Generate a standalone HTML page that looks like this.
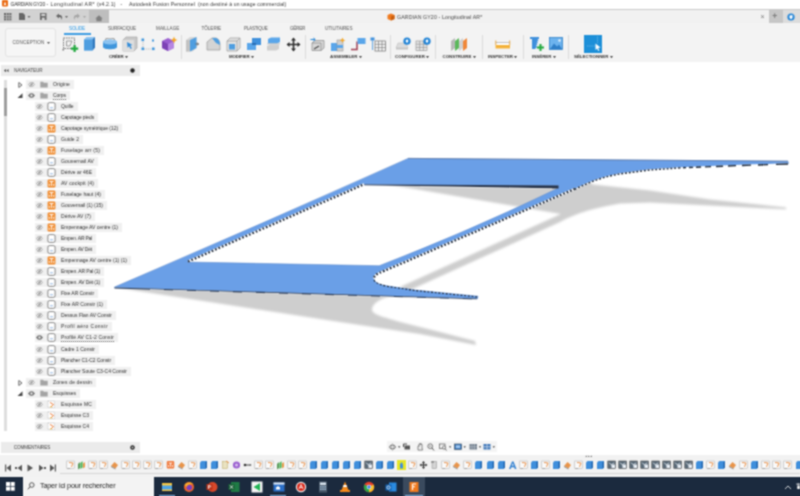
<!DOCTYPE html><html lang="fr"><head><meta charset="utf-8"><title>GARDIAN GY20 - Longitudinal AR</title><style>
*{margin:0;padding:0;box-sizing:border-box}
html{width:800px;height:496px;overflow:hidden;background:#fff;position:relative}
body{position:absolute;left:-10px;top:-10px;width:820px;height:516px;background:#fff;filter:url(#soft);font-family:"Liberation Sans",sans-serif;color:#3a3a3a}
#app{position:absolute;left:10px;top:10px;width:800px;height:496px}
.a{position:absolute}
.t{position:absolute;white-space:nowrap;line-height:1.16}
.sep{position:absolute;top:35px;width:1px;height:24px;background:#dadada}
</style></head><body><svg width="0" height="0" style="position:absolute"><defs><filter id="soft" x="0" y="0" width="100%" height="100%" color-interpolation-filters="sRGB"><feConvolveMatrix order="3" kernelMatrix="1 2 1 2 5 2 1 2 1" divisor="17" edgeMode="duplicate" preserveAlpha="true"/></filter></defs></svg><div id="app">
<svg class="a" style="left:0;top:0" width="800" height="496" viewBox="0 0 800 496">
<defs><filter id="bl" x="-5%" y="-20%" width="110%" height="140%"><feGaussianBlur stdDeviation="0.9"/></filter></defs>
<g filter="url(#bl)" fill="#cecece">
<path d="M116,287.6 L280,312.8 L340,322 L420,334 L476,345 L475,341 L440,332 L400,322 C386,317.5 371,315 372,309 C373,303 380,299 390,296 L300,288 Z"/>
<path d="M380,183 L561,214 L400,287 L408,291 L560,222 C575,214 590,208.5 620,203.5 L650,202.5 L710,205.5 L786,209.3 L786,207.5 L710,199.5 L650,190.5 L593,184.5 L570,170 Z"/>
</g>
<path d="M114.5,287 Q261.25,224.3 408,158.4 L788,161.2 L788.5,163.5 L740,165 L680,167.4 L650,169.5 L620,173.4 C605,176 590,181 575,188.8 L392,267.6 C382,272 373.5,274 374,279 C374.5,283 380,284.6 388,286 L415,290 L478,296.2 L477.5,298.8 L114.5,287.6 Z M187.5,262 L364,184.4 L558.5,185.8 L558.3,188 Q468.75,231.3 379.2,265.7 Z" fill="#6a9fe7" fill-rule="evenodd" stroke="#5b86c8" stroke-width="0.5"/>
<path d="M408,158.4 L788,161.2" stroke="#56709c" stroke-width="0.7" fill="none"/>
<g fill="none" stroke-linecap="butt">
<path d="M114.5,288 L477,299" stroke="#2b3b55" stroke-width="1.2"/>
<path d="M150,289.6 L477,299.6" stroke="#e8e8e8" stroke-width="0.8" stroke-dasharray="14 9"/>
<path d="M364,184.4 L558.5,185.6 L558.5,188.6 L470,186.8 L364,185.2 Z" fill="#26334a" stroke="none"/>
<path d="M420,186.8 L552,188.7" stroke="#f0f0f0" stroke-width="0.6"/>
<path d="M188,261.6 L364,184.3" stroke="#fff" stroke-width="2.2"/>
<path d="M188,261.6 L364,184.3" stroke="#1b2535" stroke-width="2.2" stroke-dasharray="1.7 2"/>
<path d="M575,188.8 L392,267.6 C382,272 374,274 374,278.5" stroke="#fff" stroke-width="2.2"/>
<path d="M575,188.8 L392,267.6 C382,272 374,274 374,278.5" stroke="#1b2535" stroke-width="2.2" stroke-dasharray="1.7 2"/>
<path d="M788,164 L740,165.5 L680,167.9 L650,170 L620,173.9 C605,176.5 590,181.5 575,189.3" stroke="#fff" stroke-width="1.4"/>
<path d="M788,164 L740,165.5 L680,167.9 L650,170 L620,173.9 C605,176.5 590,181.5 575,189.3" stroke="#1b2535" stroke-width="1.4" stroke-dasharray="12 8 10 7 9 6 8 5 7 5 6 4 5 3 4 3 3 2.5 2.5 2 1.9 1.9 1.9 1.9 1.9 1.9 1.9 1.9 1.9 1.9 1.9 1.9 1.9 1.9 1.9 1.9 1.9 1.9 1.9 1.9 1.9 1.9 1.9 1.9 1.9 1.9 1.9 1.9 1.9 1.9 1.9 1.9 1.9 1.9 1.9 1.9 1.9 1.9 1.9 1.9 1.9 1.9 1.9 1.9 1.9 1.9 1.9 1.9 1.9 1.9 1.9 1.9 1.9 1.9 1.9 1.9 1.9 1.9 1.9 1.9 1.9 1.9 1.9 1.9 1.9 1.9 1.9 1.9 1.9 1.9 1.9 1.9 1.9 1.9 1.9 1.9 1.9 1.9 1.9 1.9 1.9 1.9 1.9 1.9 1.9 1.9 1.9 1.9 1.9 1.9 1.9 1.9 1.9 1.9 1.9 1.9 1.9 1.9 1.9 1.9 1.9 1.9 1.9 1.9 1.9 1.9 1.9 1.9 1.9 1.9 1.9 1.9 1.9 1.9 1.9 1.9 1.9 1.9 1.9 1.9"/>
<path d="M374,280 C375.5,283.5 382,285.2 388,286.5 L415,290.5 L478,297" stroke="#1b2535" stroke-width="1.1" stroke-dasharray="2 1.7"/>
</g>
</svg>
<div class="a" style="left:-6px;top:-6px;width:812px;height:15.5px;background:#fff;"></div>
<svg class="a" style="left:1.8px;top:0.3px;" width="6" height="6.5" viewBox="0 0 6 6.5"><rect x="0" y="0" width="6" height="6.5" rx="1" fill="#ea6a12"/><path d="M1.8,5 L3,1.5 L4.2,5 Z" fill="#fff"/></svg>
<span class="t" style="left:10.5px;top:1.54px;font-size:5.1px;color:#333;letter-spacing:-0.266px;">GARDIAN GY20</span>
<span class="t" style="left:46.5px;top:1.54px;font-size:5.1px;color:#333;">-</span>
<span class="t" style="left:50.5px;top:1.54px;font-size:5.1px;color:#333;letter-spacing:0.424px;">Longitudinal AR*</span>
<span class="t" style="left:97px;top:1.54px;font-size:5.1px;color:#333;letter-spacing:0.151px;">(v4.2.1)</span>
<span class="t" style="left:120.5px;top:1.54px;font-size:5.1px;color:#333;">-</span>
<span class="t" style="left:129px;top:1.54px;font-size:5.1px;color:#333;letter-spacing:0.145px;">Autodesk Fusion Personnel</span>
<span class="t" style="left:198px;top:1.54px;font-size:5.1px;color:#333;letter-spacing:0.131px;">(non destiné à un usage commercial)</span>
<div class="a" style="left:-6px;top:8.8px;width:812px;height:14.5px;background:#f1f1f1;border-top:1px solid #c9c9c9"></div>
<div class="a" style="left:-6px;top:9.8px;width:114px;height:13.5px;background:#d2d2d2;"></div>
<div class="a" style="left:88.5px;top:9.8px;width:20px;height:13.5px;background:#bebebe;"></div>
<div class="a" style="left:768.5px;top:9.8px;width:14px;height:13.5px;background:#c6c6c6;"></div>
<div class="a" style="left:782.5px;top:9.8px;width:23.5px;height:13.5px;background:#dcdcdc;"></div>
<svg class="a" style="left:4px;top:13px;" width="8" height="8" viewBox="0 0 8 8"><g fill="#666"><rect x="0" y="0" width="2" height="2"/><rect x="2.7" y="0" width="2" height="2"/><rect x="5.4" y="0" width="2" height="2"/><rect x="0" y="2.7" width="2" height="2"/><rect x="2.7" y="2.7" width="2" height="2"/><rect x="5.4" y="2.7" width="2" height="2"/><rect x="0" y="5.4" width="2" height="2"/><rect x="2.7" y="5.4" width="2" height="2"/><rect x="5.4" y="5.4" width="2" height="2"/></g></svg>
<svg class="a" style="left:19px;top:13px;" width="12" height="8" viewBox="0 0 12 8"><path d="M0,0 H4 L6,2 V7 H0 Z" fill="#666"/><path d="M8.5,3 h3 l-1.5,2 Z" fill="#666"/></svg>
<svg class="a" style="left:40px;top:13px;" width="7" height="8" viewBox="0 0 7 8"><rect x="0" y="0" width="6.5" height="7" fill="#666"/><rect x="1.3" y="0.8" width="3.9" height="2.2" fill="#d3d3d3"/><rect x="1.8" y="4.6" width="2.9" height="2.4" fill="#d3d3d3"/></svg>
<svg class="a" style="left:55px;top:13px;" width="14" height="8" viewBox="0 0 14 8"><path d="M1,3 L4,0.5 V2 C7,2 8,4 6.5,7 C6.5,5 6,4 4,4 V5.5 Z" fill="#666"/><path d="M10,3 h3 l-1.5,2 Z" fill="#666"/></svg>
<svg class="a" style="left:73px;top:13px;" width="14" height="8" viewBox="0 0 14 8"><path d="M7,3 L4,0.5 V2 C1,2 0,4 1.5,7 C1.5,5 2,4 4,4 V5.5 Z" fill="#a5a5a5"/><path d="M10,3 h3 l-1.5,2 Z" fill="#a5a5a5"/></svg>
<svg class="a" style="left:94.5px;top:14.8px;" width="8" height="7" viewBox="0 0 8 7"><path d="M4,0.3 L7.7,3.5 H6.6 V6.3 H1.4 V3.5 H0.3 Z" fill="#7f7f7f"/></svg>
<svg class="a" style="left:386.5px;top:13px;" width="8" height="8" viewBox="0 0 8 8"><path d="M4,0.5 L7.5,2 V6 L4,7.6 L0.5,6 V2 Z" fill="#f07a1e"/><path d="M4,3.6 L7.5,2 V6 L4,7.6 Z" fill="#c85f10"/></svg>
<span class="t" style="left:397px;top:14.28px;font-size:5.2px;color:#444;letter-spacing:0.129px;">GARDIAN GY20 - Longitudinal AR*</span>
<span class="t" style="left:760.5px;top:13.24px;font-size:7px;color:#777;">×</span>
<span class="t" style="left:772.3px;top:12.07px;font-size:8.5px;color:#7a7a7a;font-weight:bold;">+</span>
<svg class="a" style="left:787px;top:13px;" width="8" height="8" viewBox="0 0 8 8"><circle cx="4" cy="4" r="3.6" fill="#1e82d6"/><path d="M2.5,2.5 L5.5,2 V5 L4,6.3 L2.5,5 Z" fill="#fff"/></svg>
<div class="a" style="left:-6px;top:23.3px;width:812px;height:39px;background:#f3f3f3;"></div>
<div class="a" style="left:4.5px;top:27.8px;width:51.5px;height:29.5px;background:#f6f6f6;border:1px solid #e2e2e2;border-radius:3px"></div>
<span class="t" style="left:12.4px;top:40.13px;font-size:4.6px;color:#555;letter-spacing:0.133px;">CONCEPTION</span>
<svg class="a" style="left:46.5px;top:41.8px;" width="4" height="3" viewBox="0 0 4 3"><path d="M0,0 H3 L1.5,2 Z" fill="#555"/></svg>
<span class="t" style="left:69px;top:26.13px;font-size:4.6px;color:#2f9be6;letter-spacing:-0.145px;">SOLIDE</span>
<span class="t" style="left:108px;top:26.13px;font-size:4.6px;color:#555;letter-spacing:-0.191px;">SURFACIQUE</span>
<span class="t" style="left:156px;top:26.13px;font-size:4.6px;color:#555;letter-spacing:0.061px;">MAILLAGE</span>
<span class="t" style="left:201.5px;top:26.13px;font-size:4.6px;color:#555;letter-spacing:-0.026px;">TÔLERIE</span>
<span class="t" style="left:244px;top:26.13px;font-size:4.6px;color:#555;letter-spacing:-0.258px;">PLASTIQUE</span>
<span class="t" style="left:290px;top:26.13px;font-size:4.6px;color:#555;letter-spacing:-0.272px;">GÉRER</span>
<span class="t" style="left:325px;top:26.13px;font-size:4.6px;color:#555;letter-spacing:-0.002px;">UTILITAIRES</span>
<div class="a" style="left:63.5px;top:33.2px;width:27px;height:1.9px;background:#3a9be2;"></div>
<div class="sep" style="left:181px"></div>
<div class="sep" style="left:304.5px"></div>
<div class="sep" style="left:389.5px"></div>
<div class="sep" style="left:435px"></div>
<div class="sep" style="left:482px"></div>
<div class="sep" style="left:523px"></div>
<div class="sep" style="left:567.5px"></div>
<span class="t" style="left:109px;top:54.05px;font-size:4.4px;color:#333;font-weight:bold;letter-spacing:-0.181px;">CRÉER</span>
<svg class="a" style="left:124.7px;top:55.6px;" width="3.5" height="3" viewBox="0 0 3.5 3"><path d="M0,0 H3 L1.5,2.2 Z" fill="#444"/></svg>
<span class="t" style="left:229px;top:54.05px;font-size:4.4px;color:#333;font-weight:bold;letter-spacing:-0.126px;">MODIFIER</span>
<svg class="a" style="left:250.7px;top:55.6px;" width="3.5" height="3" viewBox="0 0 3.5 3"><path d="M0,0 H3 L1.5,2.2 Z" fill="#444"/></svg>
<span class="t" style="left:330px;top:54.05px;font-size:4.4px;color:#333;font-weight:bold;letter-spacing:-0.014px;">ASSEMBLER</span>
<svg class="a" style="left:358.7px;top:55.6px;" width="3.5" height="3" viewBox="0 0 3.5 3"><path d="M0,0 H3 L1.5,2.2 Z" fill="#444"/></svg>
<span class="t" style="left:395px;top:54.05px;font-size:4.4px;color:#333;font-weight:bold;letter-spacing:0.042px;">CONFIGURER</span>
<svg class="a" style="left:426.2px;top:55.6px;" width="3.5" height="3" viewBox="0 0 3.5 3"><path d="M0,0 H3 L1.5,2.2 Z" fill="#444"/></svg>
<span class="t" style="left:442.5px;top:54.05px;font-size:4.4px;color:#333;font-weight:bold;letter-spacing:-0.009px;">CONSTRUIRE</span>
<svg class="a" style="left:472.7px;top:55.6px;" width="3.5" height="3" viewBox="0 0 3.5 3"><path d="M0,0 H3 L1.5,2.2 Z" fill="#444"/></svg>
<span class="t" style="left:488px;top:54.05px;font-size:4.4px;color:#333;font-weight:bold;letter-spacing:-0.02px;">INSPECTER</span>
<svg class="a" style="left:514.2px;top:55.6px;" width="3.5" height="3" viewBox="0 0 3.5 3"><path d="M0,0 H3 L1.5,2.2 Z" fill="#444"/></svg>
<span class="t" style="left:532px;top:54.05px;font-size:4.4px;color:#333;font-weight:bold;letter-spacing:-0.009px;">INSÉRER</span>
<svg class="a" style="left:552.7px;top:55.6px;" width="3.5" height="3" viewBox="0 0 3.5 3"><path d="M0,0 H3 L1.5,2.2 Z" fill="#444"/></svg>
<span class="t" style="left:574px;top:54.05px;font-size:4.4px;color:#333;font-weight:bold;letter-spacing:0.003px;">SÉLECTIONNER</span>
<svg class="a" style="left:609.7px;top:55.6px;" width="3.5" height="3" viewBox="0 0 3.5 3"><path d="M0,0 H3 L1.5,2.2 Z" fill="#444"/></svg>
<svg class="a" style="left:62px;top:36.5px;" width="17" height="15" viewBox="0 0 17 15"><rect x="1.5" y="1" width="11" height="10.5" fill="none" stroke="#444" stroke-width="0.8" stroke-dasharray="1.5 1"/><path d="M4.5,4 H10 L8,9 H4.5 Z" fill="none" stroke="#777" stroke-width="0.7"/><path d="M11.5,8 h2.2 v2.5 h2.5 v2.2 h-2.5 v2.3 h-2.2 v-2.3 h-2.5 v-2.2 h2.5 Z" fill="#1fa83c"/><rect x="0.5" y="12" width="1.5" height="1.5" fill="#777"/></svg>
<svg class="a" style="left:82.5px;top:36.3px;" width="13" height="15" viewBox="0 0 13 15"><path d="M1,3.5 L3.5,1 H12 V11.5 L9.5,14.5 H1 Z" fill="#8cc3f0"/><path d="M1,3.5 H9.5 V14.5 H1 Z" fill="#4f9ee0"/><path d="M9.5,3.5 L12,1 V11.5 L9.5,14.5 Z" fill="#2f78be"/></svg>
<svg class="a" style="left:101.5px;top:37.5px;" width="16" height="13" viewBox="0 0 16 13"><path d="M1,4 C1,1 15,1 15,4 V9 C15,12 1,12 1,9 Z" fill="#3f96dc"/><ellipse cx="8" cy="4" rx="7" ry="2.5" fill="#8cc3f0"/><path d="M3,1.5 C6,-0.5 10,-0.5 13,1.5" fill="none" stroke="#555" stroke-width="0.7"/></svg>
<svg class="a" style="left:121.5px;top:36px;" width="16" height="16" viewBox="0 0 16 16"><path d="M1,4 L4,1 H15 V12 L12,15 H1 Z" fill="#c9c9c9" stroke="#9a9a9a" stroke-width="0.6"/><path d="M1,4 H12 V15 H1 Z" fill="#dedede"/><path d="M5,6 L10.5,9 L8.3,9.6 L9.8,12.3 L8.6,12.9 L7.2,10.2 L5.6,11.7 Z" fill="#2f8ad8"/></svg>
<svg class="a" style="left:141px;top:37.5px;" width="15" height="13" viewBox="0 0 15 13"><path d="M2,2 V11 H13" fill="none" stroke="#8a8a8a" stroke-width="0.6" stroke-dasharray="1 1"/><g fill="#3f96dc"><rect x="0.5" y="0.5" width="2.6" height="2.6"/><rect x="0.5" y="9.5" width="2.6" height="2.6"/><rect x="11" y="9.5" width="2.6" height="2.6"/><rect x="11" y="1.5" width="2" height="2"/></g></svg>
<svg class="a" style="left:160px;top:36px;" width="18" height="16" viewBox="0 0 18 16"><path d="M2,5 L8,2 L14,5 V12 L8,15 L2,12 Z" fill="#9a5fd0"/><path d="M2,5 L8,8 V15 L2,12 Z" fill="#7d43b5"/><path d="M8,8 L14,5 V12 L8,15 Z" fill="#b586e2"/><path d="M14,0.5 L15,3 L17.5,4 L15,5 L14,7.5 L13,5 L10.5,4 L13,3 Z" fill="#f5a623"/></svg>
<svg class="a" style="left:185px;top:36px;" width="14" height="16" viewBox="0 0 14 16"><path d="M1,4 L5,1 H11.5 V12 L7.5,15.5 H1 Z" fill="#d6d6d6"/><path d="M1,4 H5 V15.5 H1 Z" fill="#c2c2c2"/><path d="M5,4 L11.5,1 V12 L5,15.5 Z" fill="#4f9ee0"/><path d="M10.5,8 h3 M12,6.5 l1.5,1.5 l-1.5,1.5" stroke="#444" stroke-width="0.8" fill="none"/></svg>
<svg class="a" style="left:206px;top:36.5px;" width="15" height="15" viewBox="0 0 15 15"><path d="M1,5 L6,1 H10 C13,2 14,5 14,8 V13 H1 Z" fill="#d4d4d4" stroke="#8a8a8a" stroke-width="0.6"/><path d="M6,1 H10 C13,2 14,5 14,8 L10,6 Z" fill="#4f9ee0"/></svg>
<svg class="a" style="left:226px;top:36.5px;" width="15" height="15" viewBox="0 0 15 15"><path d="M1,4 L4,1 H14 V11 L11,14 H1 Z" fill="#e3e3e3" stroke="#8a8a8a" stroke-width="0.6"/><path d="M3,7 H9 V12.5 H3 Z" fill="#4f9ee0"/><path d="M1,4 H11 V14 M11,4 L14,1" fill="none" stroke="#8a8a8a" stroke-width="0.6"/></svg>
<svg class="a" style="left:246px;top:37px;" width="16" height="14" viewBox="0 0 16 14"><path d="M6,1 H15 V8 H6 Z" fill="#3f90dc"/><path d="M1,6 H10 V13 H1 Z" fill="#5aa6ea"/><path d="M6,6 H10 V8 H6 Z" fill="#2a6eb4"/></svg>
<svg class="a" style="left:266px;top:37px;" width="15" height="14" viewBox="0 0 15 14"><path d="M2,2 L5,0.5 H14 V5 L11,6.5 H2 Z" fill="#5aa6ea"/><path d="M1,9 L4,7.5 H13 V12 L10,13.5 H1 Z" fill="#cfcfcf"/><path d="M1,6.8 H14" stroke="#bbb" stroke-width="0.8"/></svg>
<svg class="a" style="left:285.5px;top:36.5px;" width="15" height="15" viewBox="0 0 15 15"><path d="M7.5,0.5 L10,3.5 H8.3 V6.7 H11.5 V5 L14.5,7.5 L11.5,10 V8.3 H8.3 V11.5 H10 L7.5,14.5 L5,11.5 H6.7 V8.3 H3.5 V10 L0.5,7.5 L3.5,5 V6.7 H6.7 V3.5 H5 Z" fill="#2a2a2a"/></svg>
<svg class="a" style="left:310px;top:36.5px;" width="15" height="15" viewBox="0 0 15 15"><path d="M2,6 L5,3.5 H14 V11 L11,13.5 H2 Z" fill="#d8d8d8" stroke="#777" stroke-width="0.6"/><path d="M2,6 H11 V13.5" fill="none" stroke="#777" stroke-width="0.6"/><path d="M0.5,2.5 H5 M3.5,1 L5.2,2.5 L3.5,4" stroke="#1e82d6" stroke-width="1" fill="none"/><path d="M4,12 L9,9" stroke="#444" stroke-width="1.2"/></svg>
<svg class="a" style="left:330px;top:36.5px;" width="16" height="15" viewBox="0 0 16 15"><rect x="1" y="6" width="6" height="8" fill="#5aa6ea"/><rect x="7" y="3" width="6" height="11" fill="#cfcfcf" stroke="#888" stroke-width="0.5"/><rect x="7" y="8" width="6" height="3" fill="#5aa6ea"/><path d="M12.5,0.5 L13.3,2.5 L15.5,3.2 L13.3,4 L12.5,6 L11.7,4 L9.5,3.2 L11.7,2.5 Z" fill="#f5a623"/></svg>
<svg class="a" style="left:350px;top:37px;" width="16" height="14" viewBox="0 0 16 14"><path d="M1,12.5 H7 V4.5" fill="none" stroke="#a03c50" stroke-width="1.5"/><rect x="7.5" y="1" width="8" height="6" fill="#5aa6ea"/></svg>
<svg class="a" style="left:370px;top:36.5px;" width="16" height="15" viewBox="0 0 16 15"><rect x="0.5" y="0.5" width="4" height="3" fill="#3f90dc"/><path d="M2.5,3.5 V13" stroke="#3f90dc" stroke-width="0.8"/><rect x="5" y="4" width="10.5" height="10" fill="#f8f8f8" stroke="#666" stroke-width="0.7"/><path d="M5,7.3 H15.5 M5,10.6 H15.5 M8.5,4 V14 M12,4 V14" stroke="#666" stroke-width="0.6"/></svg>
<svg class="a" style="left:395px;top:36.5px;" width="16" height="15" viewBox="0 0 16 15"><path d="M1,11 L3,6 H11 L13,11 Z" fill="#dcdcdc" stroke="#b5b5b5" stroke-width="0.5"/><path d="M1,11 H13 V12.5 H1 Z" fill="#c4c4c4"/><circle cx="12" cy="4.2" r="3.6" fill="#1e82d6"/><path d="M10.8,2.8 L13.2,2.4 V4.8 L12,5.9 L10.8,4.8 Z" fill="#fff"/></svg>
<svg class="a" style="left:415px;top:36.5px;" width="16" height="15" viewBox="0 0 16 15"><rect x="1" y="4" width="11" height="9.5" fill="#e6e6e6" stroke="#8a8a8a" stroke-width="0.6"/><path d="M1,7.2 H12 M1,10.4 H12 M4.7,4 V13.5 M8.4,4 V13.5" stroke="#8a8a8a" stroke-width="0.6"/><circle cx="12" cy="4.2" r="3.6" fill="#1e82d6"/><path d="M10.8,2.8 L13.2,2.4 V4.8 L12,5.9 L10.8,4.8 Z" fill="#fff"/></svg>
<svg class="a" style="left:450px;top:36px;" width="18" height="16" viewBox="0 0 18 16"><path d="M1,5 L5,2 V12 L1,15 Z" fill="#b9b9b9"/><path d="M5,5 L9,2 V12 L5,15 Z" fill="#5cb85c"/><path d="M9,5 L13,2 V12 L9,15 Z" fill="#d0d0d0"/><path d="M13,5 L17,2 V12 L13,15 Z" fill="#f0883a"/></svg>
<svg class="a" style="left:495px;top:39.5px;" width="16" height="9" viewBox="0 0 16 9"><rect x="0.5" y="1.5" width="14.5" height="7" fill="#fff" stroke="#f0a820" stroke-width="0"/><rect x="0.5" y="5" width="14.5" height="3.5" fill="#f3b23a"/><path d="M0.8,0.5 V5 M14.7,0.5 V5" stroke="#e09010" stroke-width="0.8"/><path d="M1,2.5 H14.5" stroke="#777" stroke-width="0.5"/></svg>
<svg class="a" style="left:529px;top:36px;" width="15" height="16" viewBox="0 0 15 16"><path d="M1,1 H10 V3 H8.5 L9.5,5 H8 L9,7 H7.5 L8.5,9 H7 L8,11 L6,13 H3 V3 H1 Z" fill="#3f90dc"/><path d="M10.5,8 h2 v2.5 h2.5 v2 h-2.5 v2.5 h-2 v-2.5 h-2.5 v-2 h2.5 Z" fill="#1fa83c"/></svg>
<svg class="a" style="left:549px;top:37px;" width="14" height="13" viewBox="0 0 14 13"><rect x="0.5" y="0.5" width="13" height="12" fill="#6db3ee" stroke="#2f7fc8" stroke-width="0.8"/><path d="M1,12 L5,6.5 L8,9.5 L10,7.5 L13,12 Z" fill="#2f7fc8"/><circle cx="10.5" cy="3.5" r="1.2" fill="#e8f3fc"/></svg>
<svg class="a" style="left:583.5px;top:34.5px;" width="18.5" height="18" viewBox="0 0 18.5 18"><rect x="0" y="0" width="18.5" height="18" fill="#1c8fd8"/><path d="M3,11 H11 M13.5,1.5 V8" stroke="#9fd2f3" stroke-width="0.6" stroke-dasharray="1 0.8"/><path d="M11.5,8.5 L16.5,12.5 L14.2,12.9 L15.4,15.5 L14.3,16 L13.1,13.4 L11.5,14.9 Z" fill="#fff"/></svg>
<div class="a" style="left:1px;top:65px;width:139px;height:11px;background:#ebebeb;"></div>
<svg class="a" style="left:3.5px;top:69px;" width="5" height="3.5" viewBox="0 0 5 3.5"><path d="M2,0 L0,1.6 L2,3.2 Z M4.5,0 L2.5,1.6 L4.5,3.2 Z" fill="#444"/></svg>
<span class="t" style="left:14px;top:67.83px;font-size:4.6px;color:#444;letter-spacing:-0.072px;">NAVIGATEUR</span>
<svg class="a" style="left:129.5px;top:68px;" width="5" height="5" viewBox="0 0 5 5"><circle cx="2.5" cy="2.5" r="2.2" fill="#222"/></svg>
<div class="a" style="left:3.8px;top:80px;width:3.2px;height:351px;background:#dedede;"></div>
<div class="a" style="left:3.8px;top:87.5px;width:3.2px;height:28.5px;background:#9e9e9e;"></div>
<div class="a" style="left:26px;top:80px;width:48px;height:9px;background:#f0f0f0;"></div>
<svg class="a" style="left:17.5px;top:81.5px;" width="5" height="6" viewBox="0 0 5 6"><path d="M0.8,0.5 L4,3 L0.8,5.5 Z" fill="none" stroke="#444" stroke-width="0.8"/></svg>
<svg class="a" style="left:27.5px;top:82px;" width="7" height="5" viewBox="0 0 7 5"><path d="M0.3,2.5 C2,0 5,0 6.7,2.5 C5,5 2,5 0.3,2.5 Z" fill="none" stroke="#8e8e8e" stroke-width="0.7"/><circle cx="3.5" cy="2.5" r="1.1" fill="#8e8e8e"/><path d="M1.8,4.8 L5.2,0.2" stroke="#8e8e8e" stroke-width="0.6"/></svg>
<svg class="a" style="left:40px;top:81px;" width="8" height="7" viewBox="0 0 8 7"><path d="M0.3,0.8 H3 L3.8,1.8 H7.7 V6.5 H0.3 Z" fill="#a4a4a4"/></svg>
<span class="t" style="left:53px;top:82px;font-size:5px;color:#2e2e2e;letter-spacing:0.126px;">Origine</span>
<div class="a" style="left:26px;top:91px;width:44px;height:9px;background:#f0f0f0;"></div>
<svg class="a" style="left:17px;top:93px;" width="6" height="5.5" viewBox="0 0 6 5.5"><path d="M5.5,0.3 V5 H0.5 Z" fill="#444"/></svg>
<svg class="a" style="left:27.5px;top:93px;" width="7" height="5" viewBox="0 0 7 5"><path d="M0.3,2.5 C2,0 5,0 6.7,2.5 C5,5 2,5 0.3,2.5 Z" fill="#777" stroke="#666" stroke-width="0.7"/><circle cx="3.5" cy="2.5" r="1.1" fill="#fff"/></svg>
<svg class="a" style="left:40px;top:92px;" width="8" height="7" viewBox="0 0 8 7"><path d="M0.3,0.8 H3 L3.8,1.8 H7.7 V6.5 H0.3 Z" fill="#a4a4a4"/></svg>
<span class="t" style="left:53px;top:93px;font-size:5px;color:#2e2e2e;letter-spacing:-0.067px;border-bottom:0.6px dotted #555;">Corps</span>
<div class="a" style="left:35px;top:102px;width:42.5px;height:9px;background:#f0f0f0;"></div>
<svg class="a" style="left:35.5px;top:104px;" width="7" height="5" viewBox="0 0 7 5"><path d="M0.3,2.5 C2,0 5,0 6.7,2.5 C5,5 2,5 0.3,2.5 Z" fill="none" stroke="#8e8e8e" stroke-width="0.7"/><circle cx="3.5" cy="2.5" r="1.1" fill="#8e8e8e"/><path d="M1.8,4.8 L5.2,0.2" stroke="#8e8e8e" stroke-width="0.6"/></svg>
<svg class="a" style="left:47px;top:102px;" width="9" height="9" viewBox="0 0 9 9"><rect x="0.9" y="0.6" width="7.2" height="7.8" rx="1.6" fill="#fff" stroke="#555" stroke-width="0.7"/><path d="M3,5.8 H6" stroke="#8ab0e0" stroke-width="0.9"/></svg>
<span class="t" style="left:61px;top:104px;font-size:5px;color:#2e2e2e;letter-spacing:-0.047px;">Quille</span>
<div class="a" style="left:35px;top:113px;width:63px;height:9px;background:#f0f0f0;"></div>
<svg class="a" style="left:35.5px;top:115px;" width="7" height="5" viewBox="0 0 7 5"><path d="M0.3,2.5 C2,0 5,0 6.7,2.5 C5,5 2,5 0.3,2.5 Z" fill="none" stroke="#8e8e8e" stroke-width="0.7"/><circle cx="3.5" cy="2.5" r="1.1" fill="#8e8e8e"/><path d="M1.8,4.8 L5.2,0.2" stroke="#8e8e8e" stroke-width="0.6"/></svg>
<svg class="a" style="left:47px;top:113px;" width="9" height="9" viewBox="0 0 9 9"><rect x="0.9" y="0.6" width="7.2" height="7.8" rx="1.6" fill="#fff" stroke="#555" stroke-width="0.7"/><path d="M3,5.8 H6" stroke="#8ab0e0" stroke-width="0.9"/></svg>
<span class="t" style="left:61px;top:115px;font-size:5px;color:#2e2e2e;letter-spacing:-0.145px;">Capotage pieds</span>
<div class="a" style="left:35px;top:124px;width:87px;height:9px;background:#f0f0f0;"></div>
<svg class="a" style="left:35.5px;top:126px;" width="7" height="5" viewBox="0 0 7 5"><path d="M0.3,2.5 C2,0 5,0 6.7,2.5 C5,5 2,5 0.3,2.5 Z" fill="none" stroke="#8e8e8e" stroke-width="0.7"/><circle cx="3.5" cy="2.5" r="1.1" fill="#8e8e8e"/><path d="M1.8,4.8 L5.2,0.2" stroke="#8e8e8e" stroke-width="0.6"/></svg>
<svg class="a" style="left:47px;top:124px;" width="9" height="9" viewBox="0 0 9 9"><rect x="0.6" y="0.5" width="7.8" height="8" rx="1.3" fill="#f0892a"/><path d="M2.3,2.5 H6.7 M4.5,2.5 V7 M2.3,4.7 V7 M6.7,4.7 V7" stroke="#fff" stroke-width="0.9" fill="none"/></svg>
<span class="t" style="left:61px;top:126px;font-size:5px;color:#2e2e2e;letter-spacing:-0.033px;">Capotage symétrique (12)</span>
<div class="a" style="left:35px;top:135px;width:48px;height:9px;background:#f0f0f0;"></div>
<svg class="a" style="left:35.5px;top:137px;" width="7" height="5" viewBox="0 0 7 5"><path d="M0.3,2.5 C2,0 5,0 6.7,2.5 C5,5 2,5 0.3,2.5 Z" fill="none" stroke="#8e8e8e" stroke-width="0.7"/><circle cx="3.5" cy="2.5" r="1.1" fill="#8e8e8e"/><path d="M1.8,4.8 L5.2,0.2" stroke="#8e8e8e" stroke-width="0.6"/></svg>
<svg class="a" style="left:47px;top:135px;" width="9" height="9" viewBox="0 0 9 9"><rect x="0.9" y="0.6" width="7.2" height="7.8" rx="1.6" fill="#fff" stroke="#555" stroke-width="0.7"/><path d="M3,5.8 H6" stroke="#8ab0e0" stroke-width="0.9"/></svg>
<span class="t" style="left:61px;top:137px;font-size:5px;color:#2e2e2e;letter-spacing:0.07px;">Guide 2</span>
<div class="a" style="left:35px;top:146px;width:69px;height:9px;background:#f0f0f0;"></div>
<svg class="a" style="left:35.5px;top:148px;" width="7" height="5" viewBox="0 0 7 5"><path d="M0.3,2.5 C2,0 5,0 6.7,2.5 C5,5 2,5 0.3,2.5 Z" fill="none" stroke="#8e8e8e" stroke-width="0.7"/><circle cx="3.5" cy="2.5" r="1.1" fill="#8e8e8e"/><path d="M1.8,4.8 L5.2,0.2" stroke="#8e8e8e" stroke-width="0.6"/></svg>
<svg class="a" style="left:47px;top:146px;" width="9" height="9" viewBox="0 0 9 9"><rect x="0.6" y="0.5" width="7.8" height="8" rx="1.3" fill="#f0892a"/><path d="M2.3,2.5 H6.7 M4.5,2.5 V7 M2.3,4.7 V7 M6.7,4.7 V7" stroke="#fff" stroke-width="0.9" fill="none"/></svg>
<span class="t" style="left:61px;top:148px;font-size:5px;color:#2e2e2e;letter-spacing:0.215px;">Fuselage arr (5)</span>
<div class="a" style="left:35px;top:157px;width:63px;height:9px;background:#f0f0f0;"></div>
<svg class="a" style="left:35.5px;top:159px;" width="7" height="5" viewBox="0 0 7 5"><path d="M0.3,2.5 C2,0 5,0 6.7,2.5 C5,5 2,5 0.3,2.5 Z" fill="none" stroke="#8e8e8e" stroke-width="0.7"/><circle cx="3.5" cy="2.5" r="1.1" fill="#8e8e8e"/><path d="M1.8,4.8 L5.2,0.2" stroke="#8e8e8e" stroke-width="0.6"/></svg>
<svg class="a" style="left:47px;top:157px;" width="9" height="9" viewBox="0 0 9 9"><rect x="0.9" y="0.6" width="7.2" height="7.8" rx="1.6" fill="#fff" stroke="#555" stroke-width="0.7"/><path d="M3,5.8 H6" stroke="#8ab0e0" stroke-width="0.9"/></svg>
<span class="t" style="left:61px;top:159px;font-size:5px;color:#2e2e2e;letter-spacing:0.108px;">Gouvernail AV</span>
<div class="a" style="left:35px;top:168px;width:61px;height:9px;background:#f0f0f0;"></div>
<svg class="a" style="left:35.5px;top:170px;" width="7" height="5" viewBox="0 0 7 5"><path d="M0.3,2.5 C2,0 5,0 6.7,2.5 C5,5 2,5 0.3,2.5 Z" fill="none" stroke="#8e8e8e" stroke-width="0.7"/><circle cx="3.5" cy="2.5" r="1.1" fill="#8e8e8e"/><path d="M1.8,4.8 L5.2,0.2" stroke="#8e8e8e" stroke-width="0.6"/></svg>
<svg class="a" style="left:47px;top:168px;" width="9" height="9" viewBox="0 0 9 9"><rect x="0.9" y="0.6" width="7.2" height="7.8" rx="1.6" fill="#fff" stroke="#555" stroke-width="0.7"/><path d="M3,5.8 H6" stroke="#8ab0e0" stroke-width="0.9"/></svg>
<span class="t" style="left:61px;top:170px;font-size:5px;color:#2e2e2e;letter-spacing:0.033px;">Dérive ar 46E</span>
<div class="a" style="left:35px;top:179px;width:63px;height:9px;background:#f0f0f0;"></div>
<svg class="a" style="left:35.5px;top:181px;" width="7" height="5" viewBox="0 0 7 5"><path d="M0.3,2.5 C2,0 5,0 6.7,2.5 C5,5 2,5 0.3,2.5 Z" fill="none" stroke="#8e8e8e" stroke-width="0.7"/><circle cx="3.5" cy="2.5" r="1.1" fill="#8e8e8e"/><path d="M1.8,4.8 L5.2,0.2" stroke="#8e8e8e" stroke-width="0.6"/></svg>
<svg class="a" style="left:47px;top:179px;" width="9" height="9" viewBox="0 0 9 9"><rect x="0.6" y="0.5" width="7.8" height="8" rx="1.3" fill="#f0892a"/><path d="M2.3,2.5 H6.7 M4.5,2.5 V7 M2.3,4.7 V7 M6.7,4.7 V7" stroke="#fff" stroke-width="0.9" fill="none"/></svg>
<span class="t" style="left:61px;top:181px;font-size:5px;color:#2e2e2e;letter-spacing:0.161px;">AV cockpit (4)</span>
<div class="a" style="left:35px;top:190px;width:70px;height:9px;background:#f0f0f0;"></div>
<svg class="a" style="left:35.5px;top:192px;" width="7" height="5" viewBox="0 0 7 5"><path d="M0.3,2.5 C2,0 5,0 6.7,2.5 C5,5 2,5 0.3,2.5 Z" fill="none" stroke="#8e8e8e" stroke-width="0.7"/><circle cx="3.5" cy="2.5" r="1.1" fill="#8e8e8e"/><path d="M1.8,4.8 L5.2,0.2" stroke="#8e8e8e" stroke-width="0.6"/></svg>
<svg class="a" style="left:47px;top:190px;" width="9" height="9" viewBox="0 0 9 9"><rect x="0.6" y="0.5" width="7.8" height="8" rx="1.3" fill="#f0892a"/><path d="M2.3,2.5 H6.7 M4.5,2.5 V7 M2.3,4.7 V7 M6.7,4.7 V7" stroke="#fff" stroke-width="0.9" fill="none"/></svg>
<span class="t" style="left:61px;top:192px;font-size:5px;color:#2e2e2e;letter-spacing:0.048px;">Fuselage haut (4)</span>
<div class="a" style="left:35px;top:201px;width:72px;height:9px;background:#f0f0f0;"></div>
<svg class="a" style="left:35.5px;top:203px;" width="7" height="5" viewBox="0 0 7 5"><path d="M0.3,2.5 C2,0 5,0 6.7,2.5 C5,5 2,5 0.3,2.5 Z" fill="none" stroke="#8e8e8e" stroke-width="0.7"/><circle cx="3.5" cy="2.5" r="1.1" fill="#8e8e8e"/><path d="M1.8,4.8 L5.2,0.2" stroke="#8e8e8e" stroke-width="0.6"/></svg>
<svg class="a" style="left:47px;top:201px;" width="9" height="9" viewBox="0 0 9 9"><rect x="0.6" y="0.5" width="7.8" height="8" rx="1.3" fill="#f0892a"/><path d="M2.3,2.5 H6.7 M4.5,2.5 V7 M2.3,4.7 V7 M6.7,4.7 V7" stroke="#fff" stroke-width="0.9" fill="none"/></svg>
<span class="t" style="left:61px;top:203px;font-size:5px;color:#2e2e2e;letter-spacing:0.002px;">Gouvernail (1) (15)</span>
<div class="a" style="left:35px;top:212px;width:60px;height:9px;background:#f0f0f0;"></div>
<svg class="a" style="left:35.5px;top:214px;" width="7" height="5" viewBox="0 0 7 5"><path d="M0.3,2.5 C2,0 5,0 6.7,2.5 C5,5 2,5 0.3,2.5 Z" fill="none" stroke="#8e8e8e" stroke-width="0.7"/><circle cx="3.5" cy="2.5" r="1.1" fill="#8e8e8e"/><path d="M1.8,4.8 L5.2,0.2" stroke="#8e8e8e" stroke-width="0.6"/></svg>
<svg class="a" style="left:47px;top:212px;" width="9" height="9" viewBox="0 0 9 9"><rect x="0.6" y="0.5" width="7.8" height="8" rx="1.3" fill="#f0892a"/><path d="M2.3,2.5 H6.7 M4.5,2.5 V7 M2.3,4.7 V7 M6.7,4.7 V7" stroke="#fff" stroke-width="0.9" fill="none"/></svg>
<span class="t" style="left:61px;top:214px;font-size:5px;color:#2e2e2e;letter-spacing:0.049px;">Dérive AV (7)</span>
<div class="a" style="left:35px;top:223px;width:87px;height:9px;background:#f0f0f0;"></div>
<svg class="a" style="left:35.5px;top:225px;" width="7" height="5" viewBox="0 0 7 5"><path d="M0.3,2.5 C2,0 5,0 6.7,2.5 C5,5 2,5 0.3,2.5 Z" fill="none" stroke="#8e8e8e" stroke-width="0.7"/><circle cx="3.5" cy="2.5" r="1.1" fill="#8e8e8e"/><path d="M1.8,4.8 L5.2,0.2" stroke="#8e8e8e" stroke-width="0.6"/></svg>
<svg class="a" style="left:47px;top:223px;" width="9" height="9" viewBox="0 0 9 9"><rect x="0.6" y="0.5" width="7.8" height="8" rx="1.3" fill="#f0892a"/><path d="M2.3,2.5 H6.7 M4.5,2.5 V7 M2.3,4.7 V7 M6.7,4.7 V7" stroke="#fff" stroke-width="0.9" fill="none"/></svg>
<span class="t" style="left:61px;top:225px;font-size:5px;color:#2e2e2e;letter-spacing:-0.007px;">Empennage AV centre (1)</span>
<div class="a" style="left:35px;top:234px;width:61px;height:9px;background:#f0f0f0;"></div>
<svg class="a" style="left:35.5px;top:236px;" width="7" height="5" viewBox="0 0 7 5"><path d="M0.3,2.5 C2,0 5,0 6.7,2.5 C5,5 2,5 0.3,2.5 Z" fill="none" stroke="#8e8e8e" stroke-width="0.7"/><circle cx="3.5" cy="2.5" r="1.1" fill="#8e8e8e"/><path d="M1.8,4.8 L5.2,0.2" stroke="#8e8e8e" stroke-width="0.6"/></svg>
<svg class="a" style="left:47px;top:234px;" width="9" height="9" viewBox="0 0 9 9"><rect x="0.9" y="0.6" width="7.2" height="7.8" rx="1.6" fill="#fff" stroke="#555" stroke-width="0.7"/><path d="M3,5.8 H6" stroke="#8ab0e0" stroke-width="0.9"/></svg>
<span class="t" style="left:61px;top:236px;font-size:5px;color:#2e2e2e;letter-spacing:-0.223px;">Empen. AR Pal</span>
<div class="a" style="left:35px;top:245px;width:61px;height:9px;background:#f0f0f0;"></div>
<svg class="a" style="left:35.5px;top:247px;" width="7" height="5" viewBox="0 0 7 5"><path d="M0.3,2.5 C2,0 5,0 6.7,2.5 C5,5 2,5 0.3,2.5 Z" fill="none" stroke="#8e8e8e" stroke-width="0.7"/><circle cx="3.5" cy="2.5" r="1.1" fill="#8e8e8e"/><path d="M1.8,4.8 L5.2,0.2" stroke="#8e8e8e" stroke-width="0.6"/></svg>
<svg class="a" style="left:47px;top:245px;" width="9" height="9" viewBox="0 0 9 9"><rect x="0.9" y="0.6" width="7.2" height="7.8" rx="1.6" fill="#fff" stroke="#555" stroke-width="0.7"/><path d="M3,5.8 H6" stroke="#8ab0e0" stroke-width="0.9"/></svg>
<span class="t" style="left:61px;top:247px;font-size:5px;color:#2e2e2e;letter-spacing:-0.216px;">Empen. AV Dét</span>
<div class="a" style="left:35px;top:256px;width:96px;height:9px;background:#f0f0f0;"></div>
<svg class="a" style="left:35.5px;top:258px;" width="7" height="5" viewBox="0 0 7 5"><path d="M0.3,2.5 C2,0 5,0 6.7,2.5 C5,5 2,5 0.3,2.5 Z" fill="none" stroke="#8e8e8e" stroke-width="0.7"/><circle cx="3.5" cy="2.5" r="1.1" fill="#8e8e8e"/><path d="M1.8,4.8 L5.2,0.2" stroke="#8e8e8e" stroke-width="0.6"/></svg>
<svg class="a" style="left:47px;top:256px;" width="9" height="9" viewBox="0 0 9 9"><rect x="0.6" y="0.5" width="7.8" height="8" rx="1.3" fill="#f0892a"/><path d="M2.3,2.5 H6.7 M4.5,2.5 V7 M2.3,4.7 V7 M6.7,4.7 V7" stroke="#fff" stroke-width="0.9" fill="none"/></svg>
<span class="t" style="left:61px;top:258px;font-size:5px;color:#2e2e2e;letter-spacing:0.05px;">Empennage AV centre (1) (1)</span>
<div class="a" style="left:35px;top:267px;width:69px;height:9px;background:#f0f0f0;"></div>
<svg class="a" style="left:35.5px;top:269px;" width="7" height="5" viewBox="0 0 7 5"><path d="M0.3,2.5 C2,0 5,0 6.7,2.5 C5,5 2,5 0.3,2.5 Z" fill="none" stroke="#8e8e8e" stroke-width="0.7"/><circle cx="3.5" cy="2.5" r="1.1" fill="#8e8e8e"/><path d="M1.8,4.8 L5.2,0.2" stroke="#8e8e8e" stroke-width="0.6"/></svg>
<svg class="a" style="left:47px;top:267px;" width="9" height="9" viewBox="0 0 9 9"><rect x="0.9" y="0.6" width="7.2" height="7.8" rx="1.6" fill="#fff" stroke="#555" stroke-width="0.7"/><path d="M3,5.8 H6" stroke="#8ab0e0" stroke-width="0.9"/></svg>
<span class="t" style="left:61px;top:269px;font-size:5px;color:#2e2e2e;letter-spacing:-0.141px;">Empen. AR Pal (1)</span>
<div class="a" style="left:35px;top:278px;width:69px;height:9px;background:#f0f0f0;"></div>
<svg class="a" style="left:35.5px;top:280px;" width="7" height="5" viewBox="0 0 7 5"><path d="M0.3,2.5 C2,0 5,0 6.7,2.5 C5,5 2,5 0.3,2.5 Z" fill="none" stroke="#8e8e8e" stroke-width="0.7"/><circle cx="3.5" cy="2.5" r="1.1" fill="#8e8e8e"/><path d="M1.8,4.8 L5.2,0.2" stroke="#8e8e8e" stroke-width="0.6"/></svg>
<svg class="a" style="left:47px;top:278px;" width="9" height="9" viewBox="0 0 9 9"><rect x="0.9" y="0.6" width="7.2" height="7.8" rx="1.6" fill="#fff" stroke="#555" stroke-width="0.7"/><path d="M3,5.8 H6" stroke="#8ab0e0" stroke-width="0.9"/></svg>
<span class="t" style="left:61px;top:280px;font-size:5px;color:#2e2e2e;letter-spacing:-0.136px;">Empen. AV Dét (1)</span>
<div class="a" style="left:35px;top:289px;width:63px;height:9px;background:#f0f0f0;"></div>
<svg class="a" style="left:35.5px;top:291px;" width="7" height="5" viewBox="0 0 7 5"><path d="M0.3,2.5 C2,0 5,0 6.7,2.5 C5,5 2,5 0.3,2.5 Z" fill="none" stroke="#8e8e8e" stroke-width="0.7"/><circle cx="3.5" cy="2.5" r="1.1" fill="#8e8e8e"/><path d="M1.8,4.8 L5.2,0.2" stroke="#8e8e8e" stroke-width="0.6"/></svg>
<svg class="a" style="left:47px;top:289px;" width="9" height="9" viewBox="0 0 9 9"><rect x="0.9" y="0.6" width="7.2" height="7.8" rx="1.6" fill="#fff" stroke="#555" stroke-width="0.7"/><path d="M3,5.8 H6" stroke="#8ab0e0" stroke-width="0.9"/></svg>
<span class="t" style="left:61px;top:291px;font-size:5px;color:#2e2e2e;letter-spacing:-0.044px;">Fixe AR Constr</span>
<div class="a" style="left:35px;top:300px;width:72px;height:9px;background:#f0f0f0;"></div>
<svg class="a" style="left:35.5px;top:302px;" width="7" height="5" viewBox="0 0 7 5"><path d="M0.3,2.5 C2,0 5,0 6.7,2.5 C5,5 2,5 0.3,2.5 Z" fill="none" stroke="#8e8e8e" stroke-width="0.7"/><circle cx="3.5" cy="2.5" r="1.1" fill="#8e8e8e"/><path d="M1.8,4.8 L5.2,0.2" stroke="#8e8e8e" stroke-width="0.6"/></svg>
<svg class="a" style="left:47px;top:300px;" width="9" height="9" viewBox="0 0 9 9"><rect x="0.9" y="0.6" width="7.2" height="7.8" rx="1.6" fill="#fff" stroke="#555" stroke-width="0.7"/><path d="M3,5.8 H6" stroke="#8ab0e0" stroke-width="0.9"/></svg>
<span class="t" style="left:61px;top:302px;font-size:5px;color:#2e2e2e;letter-spacing:0.049px;">Fixe AR Constr (1)</span>
<div class="a" style="left:35px;top:311px;width:81px;height:9px;background:#f0f0f0;"></div>
<svg class="a" style="left:35.5px;top:313px;" width="7" height="5" viewBox="0 0 7 5"><path d="M0.3,2.5 C2,0 5,0 6.7,2.5 C5,5 2,5 0.3,2.5 Z" fill="none" stroke="#8e8e8e" stroke-width="0.7"/><circle cx="3.5" cy="2.5" r="1.1" fill="#8e8e8e"/><path d="M1.8,4.8 L5.2,0.2" stroke="#8e8e8e" stroke-width="0.6"/></svg>
<svg class="a" style="left:47px;top:311px;" width="9" height="9" viewBox="0 0 9 9"><rect x="0.9" y="0.6" width="7.2" height="7.8" rx="1.6" fill="#fff" stroke="#555" stroke-width="0.7"/><path d="M3,5.8 H6" stroke="#8ab0e0" stroke-width="0.9"/></svg>
<span class="t" style="left:61px;top:313px;font-size:5px;color:#2e2e2e;letter-spacing:-0.015px;">Dessus Flan AV Constr</span>
<div class="a" style="left:35px;top:322px;width:77px;height:9px;background:#f0f0f0;"></div>
<svg class="a" style="left:35.5px;top:324px;" width="7" height="5" viewBox="0 0 7 5"><path d="M0.3,2.5 C2,0 5,0 6.7,2.5 C5,5 2,5 0.3,2.5 Z" fill="none" stroke="#8e8e8e" stroke-width="0.7"/><circle cx="3.5" cy="2.5" r="1.1" fill="#8e8e8e"/><path d="M1.8,4.8 L5.2,0.2" stroke="#8e8e8e" stroke-width="0.6"/></svg>
<svg class="a" style="left:47px;top:322px;" width="9" height="9" viewBox="0 0 9 9"><rect x="0.9" y="0.6" width="7.2" height="7.8" rx="1.6" fill="#fff" stroke="#555" stroke-width="0.7"/><path d="M3,5.8 H6" stroke="#8ab0e0" stroke-width="0.9"/></svg>
<span class="t" style="left:61px;top:324px;font-size:5px;color:#2e2e2e;letter-spacing:0.45px;">Profil aéro Constr</span>
<div class="a" style="left:35px;top:333px;width:83px;height:9px;background:#f0f0f0;"></div>
<svg class="a" style="left:35.5px;top:335px;" width="7" height="5" viewBox="0 0 7 5"><path d="M0.3,2.5 C2,0 5,0 6.7,2.5 C5,5 2,5 0.3,2.5 Z" fill="#777" stroke="#666" stroke-width="0.7"/><circle cx="3.5" cy="2.5" r="1.1" fill="#fff"/></svg>
<svg class="a" style="left:47px;top:333px;" width="9" height="9" viewBox="0 0 9 9"><rect x="0.9" y="0.6" width="7.2" height="7.8" rx="1.6" fill="#fff" stroke="#555" stroke-width="0.7"/><path d="M3,5.8 H6" stroke="#8ab0e0" stroke-width="0.9"/></svg>
<span class="t" style="left:61px;top:335px;font-size:5px;color:#2e2e2e;letter-spacing:0.14px;border-bottom:0.6px dotted #555;">Profilé AV C1-2 Constr</span>
<div class="a" style="left:35px;top:345px;width:64px;height:9px;background:#f0f0f0;"></div>
<svg class="a" style="left:35.5px;top:347px;" width="7" height="5" viewBox="0 0 7 5"><path d="M0.3,2.5 C2,0 5,0 6.7,2.5 C5,5 2,5 0.3,2.5 Z" fill="none" stroke="#8e8e8e" stroke-width="0.7"/><circle cx="3.5" cy="2.5" r="1.1" fill="#8e8e8e"/><path d="M1.8,4.8 L5.2,0.2" stroke="#8e8e8e" stroke-width="0.6"/></svg>
<svg class="a" style="left:47px;top:345px;" width="9" height="9" viewBox="0 0 9 9"><rect x="0.9" y="0.6" width="7.2" height="7.8" rx="1.6" fill="#fff" stroke="#555" stroke-width="0.7"/><path d="M3,5.8 H6" stroke="#8ab0e0" stroke-width="0.9"/></svg>
<span class="t" style="left:61px;top:347px;font-size:5px;color:#2e2e2e;letter-spacing:0.007px;">Cadre 1 Constr</span>
<div class="a" style="left:35px;top:356px;width:80px;height:9px;background:#f0f0f0;"></div>
<svg class="a" style="left:35.5px;top:358px;" width="7" height="5" viewBox="0 0 7 5"><path d="M0.3,2.5 C2,0 5,0 6.7,2.5 C5,5 2,5 0.3,2.5 Z" fill="none" stroke="#8e8e8e" stroke-width="0.7"/><circle cx="3.5" cy="2.5" r="1.1" fill="#8e8e8e"/><path d="M1.8,4.8 L5.2,0.2" stroke="#8e8e8e" stroke-width="0.6"/></svg>
<svg class="a" style="left:47px;top:356px;" width="9" height="9" viewBox="0 0 9 9"><rect x="0.9" y="0.6" width="7.2" height="7.8" rx="1.6" fill="#fff" stroke="#555" stroke-width="0.7"/><path d="M3,5.8 H6" stroke="#8ab0e0" stroke-width="0.9"/></svg>
<span class="t" style="left:61px;top:358px;font-size:5px;color:#2e2e2e;letter-spacing:-0.08px;">Plancher C1-C2 Constr</span>
<div class="a" style="left:35px;top:367px;width:96px;height:9px;background:#f0f0f0;"></div>
<svg class="a" style="left:35.5px;top:369px;" width="7" height="5" viewBox="0 0 7 5"><path d="M0.3,2.5 C2,0 5,0 6.7,2.5 C5,5 2,5 0.3,2.5 Z" fill="none" stroke="#8e8e8e" stroke-width="0.7"/><circle cx="3.5" cy="2.5" r="1.1" fill="#8e8e8e"/><path d="M1.8,4.8 L5.2,0.2" stroke="#8e8e8e" stroke-width="0.6"/></svg>
<svg class="a" style="left:47px;top:367px;" width="9" height="9" viewBox="0 0 9 9"><rect x="0.9" y="0.6" width="7.2" height="7.8" rx="1.6" fill="#fff" stroke="#555" stroke-width="0.7"/><path d="M3,5.8 H6" stroke="#8ab0e0" stroke-width="0.9"/></svg>
<span class="t" style="left:61px;top:369px;font-size:5px;color:#2e2e2e;letter-spacing:-0.005px;">Plancher Soute C3-C4 Constr</span>
<div class="a" style="left:26px;top:378px;width:70px;height:9px;background:#f0f0f0;"></div>
<svg class="a" style="left:17.5px;top:379.5px;" width="5" height="6" viewBox="0 0 5 6"><path d="M0.8,0.5 L4,3 L0.8,5.5 Z" fill="none" stroke="#444" stroke-width="0.8"/></svg>
<svg class="a" style="left:27.5px;top:380px;" width="7" height="5" viewBox="0 0 7 5"><path d="M0.3,2.5 C2,0 5,0 6.7,2.5 C5,5 2,5 0.3,2.5 Z" fill="none" stroke="#8e8e8e" stroke-width="0.7"/><circle cx="3.5" cy="2.5" r="1.1" fill="#8e8e8e"/><path d="M1.8,4.8 L5.2,0.2" stroke="#8e8e8e" stroke-width="0.6"/></svg>
<svg class="a" style="left:40px;top:379px;" width="8" height="7" viewBox="0 0 8 7"><path d="M0.3,0.8 H3 L3.8,1.8 H7.7 V6.5 H0.3 Z" fill="#a4a4a4"/></svg>
<span class="t" style="left:53px;top:380px;font-size:5px;color:#2e2e2e;letter-spacing:0.154px;">Zones de dessin</span>
<div class="a" style="left:26px;top:389px;width:54px;height:9px;background:#f0f0f0;"></div>
<svg class="a" style="left:17px;top:391px;" width="6" height="5.5" viewBox="0 0 6 5.5"><path d="M5.5,0.3 V5 H0.5 Z" fill="#444"/></svg>
<svg class="a" style="left:27.5px;top:391px;" width="7" height="5" viewBox="0 0 7 5"><path d="M0.3,2.5 C2,0 5,0 6.7,2.5 C5,5 2,5 0.3,2.5 Z" fill="#777" stroke="#666" stroke-width="0.7"/><circle cx="3.5" cy="2.5" r="1.1" fill="#fff"/></svg>
<svg class="a" style="left:40px;top:390px;" width="8" height="7" viewBox="0 0 8 7"><path d="M0.3,0.8 H3 L3.8,1.8 H7.7 V6.5 H0.3 Z" fill="#a4a4a4"/></svg>
<span class="t" style="left:53px;top:391px;font-size:5px;color:#2e2e2e;letter-spacing:0.024px;">Esquisses</span>
<div class="a" style="left:35px;top:400px;width:61px;height:9px;background:#f0f0f0;"></div>
<svg class="a" style="left:35.5px;top:402px;" width="7" height="5" viewBox="0 0 7 5"><path d="M0.3,2.5 C2,0 5,0 6.7,2.5 C5,5 2,5 0.3,2.5 Z" fill="none" stroke="#8e8e8e" stroke-width="0.7"/><circle cx="3.5" cy="2.5" r="1.1" fill="#8e8e8e"/><path d="M1.8,4.8 L5.2,0.2" stroke="#8e8e8e" stroke-width="0.6"/></svg>
<svg class="a" style="left:47px;top:400px;" width="9" height="9" viewBox="0 0 9 9"><rect x="1" y="1" width="6.5" height="6.5" fill="#fff" stroke="#9a9a9a" stroke-width="0.5" stroke-dasharray="1 0.8"/><path d="M3,2.5 L6.5,4.5 L4,6.8" fill="none" stroke="#e8702a" stroke-width="0.9"/><circle cx="4" cy="6.8" r="0.7" fill="#e8b020"/></svg>
<span class="t" style="left:61px;top:402px;font-size:5px;color:#2e2e2e;letter-spacing:0.141px;">Esquisse MC</span>
<div class="a" style="left:35px;top:411px;width:58px;height:9px;background:#f0f0f0;"></div>
<svg class="a" style="left:35.5px;top:413px;" width="7" height="5" viewBox="0 0 7 5"><path d="M0.3,2.5 C2,0 5,0 6.7,2.5 C5,5 2,5 0.3,2.5 Z" fill="none" stroke="#8e8e8e" stroke-width="0.7"/><circle cx="3.5" cy="2.5" r="1.1" fill="#8e8e8e"/><path d="M1.8,4.8 L5.2,0.2" stroke="#8e8e8e" stroke-width="0.6"/></svg>
<svg class="a" style="left:47px;top:411px;" width="9" height="9" viewBox="0 0 9 9"><rect x="1" y="1" width="6.5" height="6.5" fill="#fff" stroke="#9a9a9a" stroke-width="0.5" stroke-dasharray="1 0.8"/><path d="M3,2.5 L6.5,4.5 L4,6.8" fill="none" stroke="#e8702a" stroke-width="0.9"/><circle cx="4" cy="6.8" r="0.7" fill="#e8b020"/></svg>
<span class="t" style="left:61px;top:413px;font-size:5px;color:#2e2e2e;letter-spacing:-0.006px;">Esquisse C3</span>
<div class="a" style="left:35px;top:422px;width:58px;height:9px;background:#f0f0f0;"></div>
<svg class="a" style="left:35.5px;top:424px;" width="7" height="5" viewBox="0 0 7 5"><path d="M0.3,2.5 C2,0 5,0 6.7,2.5 C5,5 2,5 0.3,2.5 Z" fill="none" stroke="#8e8e8e" stroke-width="0.7"/><circle cx="3.5" cy="2.5" r="1.1" fill="#8e8e8e"/><path d="M1.8,4.8 L5.2,0.2" stroke="#8e8e8e" stroke-width="0.6"/></svg>
<svg class="a" style="left:47px;top:422px;" width="9" height="9" viewBox="0 0 9 9"><rect x="1" y="1" width="6.5" height="6.5" fill="#fff" stroke="#9a9a9a" stroke-width="0.5" stroke-dasharray="1 0.8"/><path d="M3,2.5 L6.5,4.5 L4,6.8" fill="none" stroke="#e8702a" stroke-width="0.9"/><circle cx="4" cy="6.8" r="0.7" fill="#e8b020"/></svg>
<span class="t" style="left:61px;top:424px;font-size:5px;color:#2e2e2e;letter-spacing:-0.006px;">Esquisse C4</span>
<div class="a" style="left:1px;top:441.8px;width:139px;height:11px;background:#ebebeb;"></div>
<span class="t" style="left:13.7px;top:444.63px;font-size:4.6px;color:#444;letter-spacing:-0.061px;">COMMENTAIRES</span>
<svg class="a" style="left:129.5px;top:444.8px;" width="5" height="5" viewBox="0 0 5 5"><circle cx="2.5" cy="2.5" r="2.2" fill="#222"/><path d="M1.5,2.5 H3.5 M2.5,1.5 V3.5" stroke="#fff" stroke-width="0.6"/></svg>
<div class="a" style="left:386.5px;top:441px;width:110px;height:10.5px;background:#f4f4f4;"></div>
<svg class="a" style="left:389px;top:442.5px;" width="12" height="8" viewBox="0 0 12 8"><ellipse cx="3.5" cy="4" rx="3" ry="1.8" fill="none" stroke="#555" stroke-width="0.8"/><ellipse cx="3.5" cy="4" rx="1.4" ry="3" fill="none" stroke="#777" stroke-width="0.6"/><path d="M9,3.2 h2.4 l-1.2,1.7 Z" fill="#444"/></svg>
<svg class="a" style="left:402.5px;top:442.5px;" width="12" height="8" viewBox="0 0 12 8"><rect x="1.5" y="2.5" width="5.5" height="4" fill="#555"/><path d="M0.5,1 L4,1 M0.5,1 V4" stroke="#333" stroke-width="0.9" fill="none"/></svg>
<svg class="a" style="left:416px;top:442.5px;" width="12" height="8" viewBox="0 0 12 8"><path d="M2,7 V3.5 C2,2.5 3,2.5 3,3.5 V1.5 C3,0.5 4,0.5 4,1.5 V1 C4,0 5,0 5,1 V1.8 C5,0.8 6,0.8 6,1.8 V5 L6.5,7 Z" fill="none" stroke="#555" stroke-width="0.7"/></svg>
<svg class="a" style="left:427px;top:442.5px;" width="12" height="8" viewBox="0 0 12 8"><circle cx="3.2" cy="3.2" r="2.4" fill="none" stroke="#555" stroke-width="0.8"/><path d="M5,5 L7,7.5" stroke="#555" stroke-width="1"/><path d="M2,3.2 H4.4" stroke="#555" stroke-width="0.6"/></svg>
<svg class="a" style="left:439px;top:442.5px;" width="12" height="8" viewBox="0 0 12 8"><rect x="0.5" y="1" width="5.5" height="4.5" fill="none" stroke="#555" stroke-width="0.7"/><circle cx="5" cy="4.5" r="1.6" fill="#f4f4f4" stroke="#555" stroke-width="0.7"/><path d="M6.2,5.8 L7.5,7.5" stroke="#555" stroke-width="0.9"/><path d="M10,3.2 h2.4 l-1.2,1.7 Z" fill="#444"/></svg>
<svg class="a" style="left:454px;top:442.5px;" width="12" height="8" viewBox="0 0 12 8"><rect x="0.5" y="1" width="7" height="5.5" fill="#2f6fb5" stroke="#3a4a5a" stroke-width="0.6"/><rect x="1.8" y="2.2" width="4.4" height="3" fill="#9cc4ee"/><path d="M9.5,3.2 h2.4 l-1.2,1.7 Z" fill="#444"/></svg>
<svg class="a" style="left:468.5px;top:442.5px;" width="12" height="8" viewBox="0 0 12 8"><rect x="0.5" y="1" width="7.5" height="5.5" fill="#75818e"/><path d="M0.5,3.8 H8 M3,1 V6.5 M5.5,1 V6.5" stroke="#c9d2dc" stroke-width="0.5"/><path d="M9.8,3.2 h2.4 l-1.2,1.7 Z" fill="#444"/></svg>
<svg class="a" style="left:482.5px;top:442.5px;" width="12" height="8" viewBox="0 0 12 8"><rect x="0.5" y="1" width="7" height="5.5" fill="#3f77b8"/><path d="M0.5,3.8 H7.5 M4,1 V6.5" stroke="#dfe8f2" stroke-width="0.7"/><path d="M9.6,3.2 h2.4 l-1.2,1.7 Z" fill="#444"/></svg>
<div class="a" style="left:-6px;top:455px;width:812px;height:22px;background:#f2f2f2;"></div>
<svg class="a" style="left:4px;top:463.7px;" width="55" height="9" viewBox="0 0 55 9"><g fill="#555"><path d="M1,0.5 h1.2 v7 h-1.2 Z M7,0.5 V7.5 L2.5,4 Z"/><path d="M18,0.8 V7.2 L13.5,4 Z M13,3 h-2 v2 h2 Z"/><path d="M23.5,0.5 L29,4 L23.5,7.5 Z"/><path d="M35,0.8 V7.2 L39.5,4 Z M40,3 h2 v2 h-2 Z"/><path d="M46,0.5 V7.5 L50.5,4 Z M50.8,0.5 h1.2 v7 h-1.2 Z"/></g></svg>
<svg class="a" style="left:66.2px;top:460px;" width="9" height="10" viewBox="0 0 9 10"><rect x="0.8" y="1" width="7.4" height="7.4" fill="#fafafa" stroke="#a9a9a9" stroke-width="0.5"/><path d="M3,2.5 L7,3 L5.5,7" fill="none" stroke="#e8883a" stroke-width="0.9"/><path d="M1.2,8.5 h3" stroke="#777" stroke-width="0.5"/></svg>
<div class="a" style="left:70.4px;top:472.5px;width:0.6px;height:1.5px;background:#999"></div>
<svg class="a" style="left:77.235px;top:460px;" width="9" height="10" viewBox="0 0 9 10"><path d="M1,4 L3,2 V8 L1,9.5 Z" fill="#5a9a5a"/><path d="M3.5,3 L5.5,1 V7.5 L3.5,9 Z" fill="#3fae4a"/><path d="M6,3.5 L8,2 V7 L6,8.5 Z" fill="#e89a4a"/></svg>
<div class="a" style="left:81.435px;top:472.5px;width:0.6px;height:1.5px;background:#999"></div>
<svg class="a" style="left:88.27000000000001px;top:460px;" width="9" height="10" viewBox="0 0 9 10"><rect x="0.8" y="1" width="7.4" height="7.4" fill="#fafafa" stroke="#a9a9a9" stroke-width="0.5"/><path d="M3,2.5 L7,3 L5.5,7" fill="none" stroke="#e8883a" stroke-width="0.9"/><path d="M1.2,8.5 h3" stroke="#777" stroke-width="0.5"/></svg>
<div class="a" style="left:92.47000000000001px;top:472.5px;width:0.6px;height:1.5px;background:#999"></div>
<svg class="a" style="left:99.305px;top:460px;" width="9" height="10" viewBox="0 0 9 10"><rect x="0.8" y="1" width="7.4" height="7.4" fill="#fafafa" stroke="#a9a9a9" stroke-width="0.5"/><path d="M3,2.5 L7,3 L5.5,7" fill="none" stroke="#e8883a" stroke-width="0.9"/><path d="M1.2,8.5 h3" stroke="#777" stroke-width="0.5"/></svg>
<div class="a" style="left:103.50500000000001px;top:472.5px;width:0.6px;height:1.5px;background:#999"></div>
<svg class="a" style="left:110.34px;top:460px;" width="9" height="10" viewBox="0 0 9 10"><path d="M1,6 L4.5,2 L8,5 L5.5,8.5 Z" fill="#e8944a"/><path d="M1,6 L5.5,8.5 L5.5,9.5 L1,7 Z" fill="#8a8a8a"/></svg>
<div class="a" style="left:114.54px;top:472.5px;width:0.6px;height:1.5px;background:#999"></div>
<svg class="a" style="left:121.375px;top:460px;" width="9" height="10" viewBox="0 0 9 10"><rect x="0.8" y="1" width="7.4" height="7.4" fill="#fafafa" stroke="#a9a9a9" stroke-width="0.5"/><path d="M3,2.5 L7,3 L5.5,7" fill="none" stroke="#e8883a" stroke-width="0.9"/><path d="M1.2,8.5 h3" stroke="#777" stroke-width="0.5"/></svg>
<div class="a" style="left:125.575px;top:472.5px;width:0.6px;height:1.5px;background:#999"></div>
<svg class="a" style="left:132.41000000000003px;top:460px;" width="9" height="10" viewBox="0 0 9 10"><rect x="0.8" y="1" width="7.4" height="7.4" fill="#fafafa" stroke="#a9a9a9" stroke-width="0.5"/><path d="M3,2.5 L7,3 L5.5,7" fill="none" stroke="#e8883a" stroke-width="0.9"/><path d="M1.2,8.5 h3" stroke="#777" stroke-width="0.5"/></svg>
<div class="a" style="left:136.61px;top:472.5px;width:0.6px;height:1.5px;background:#999"></div>
<svg class="a" style="left:143.445px;top:460px;" width="9" height="10" viewBox="0 0 9 10"><rect x="0.8" y="1" width="7.4" height="7.4" fill="#fafafa" stroke="#a9a9a9" stroke-width="0.5"/><path d="M3,2.5 L7,3 L5.5,7" fill="none" stroke="#e8883a" stroke-width="0.9"/><path d="M1.2,8.5 h3" stroke="#777" stroke-width="0.5"/></svg>
<div class="a" style="left:147.64499999999998px;top:472.5px;width:0.6px;height:1.5px;background:#999"></div>
<svg class="a" style="left:154.48000000000002px;top:460px;" width="9" height="10" viewBox="0 0 9 10"><rect x="0.8" y="1" width="7.4" height="7.4" fill="#fafafa" stroke="#a9a9a9" stroke-width="0.5"/><path d="M3,2.5 L7,3 L5.5,7" fill="none" stroke="#e8883a" stroke-width="0.9"/><path d="M1.2,8.5 h3" stroke="#777" stroke-width="0.5"/></svg>
<div class="a" style="left:158.68px;top:472.5px;width:0.6px;height:1.5px;background:#999"></div>
<svg class="a" style="left:165.515px;top:460px;" width="9" height="10" viewBox="0 0 9 10"><rect x="0.8" y="1" width="7.4" height="7.6" rx="1" fill="#f0783a"/><path d="M2.5,3 H6.5 M4.5,3 V7 M2.5,5 V7 M6.5,5 V7" stroke="#fff" stroke-width="0.8"/></svg>
<div class="a" style="left:169.71499999999997px;top:472.5px;width:0.6px;height:1.5px;background:#999"></div>
<svg class="a" style="left:176.55px;top:460px;" width="9" height="10" viewBox="0 0 9 10"><path d="M1,6 L4.5,2 L8,5 L5.5,8.5 Z" fill="#e8944a"/><path d="M1,6 L5.5,8.5 L5.5,9.5 L1,7 Z" fill="#8a8a8a"/></svg>
<div class="a" style="left:180.75px;top:472.5px;width:0.6px;height:1.5px;background:#999"></div>
<svg class="a" style="left:187.585px;top:460px;" width="9" height="10" viewBox="0 0 9 10"><rect x="0.8" y="1" width="7.4" height="7.4" fill="#fafafa" stroke="#a9a9a9" stroke-width="0.5"/><path d="M3,2.5 L7,3 L5.5,7" fill="none" stroke="#e8883a" stroke-width="0.9"/><path d="M1.2,8.5 h3" stroke="#777" stroke-width="0.5"/></svg>
<div class="a" style="left:191.785px;top:472.5px;width:0.6px;height:1.5px;background:#999"></div>
<svg class="a" style="left:198.62px;top:460px;" width="9" height="10" viewBox="0 0 9 10"><path d="M1,2.5 L2.5,1 H8 V7.5 L6.5,9 H1 Z" fill="#3f8fdc"/><path d="M6.5,2.5 L8,1 V7.5 L6.5,9 Z" fill="#2467ad"/></svg>
<div class="a" style="left:202.82px;top:472.5px;width:0.6px;height:1.5px;background:#999"></div>
<svg class="a" style="left:209.65500000000003px;top:460px;" width="9" height="10" viewBox="0 0 9 10"><path d="M1,2.5 L2.5,1 H8 V7.5 L6.5,9 H1 Z" fill="#3f8fdc"/><path d="M6.5,2.5 L8,1 V7.5 L6.5,9 Z" fill="#2467ad"/></svg>
<div class="a" style="left:213.85500000000002px;top:472.5px;width:0.6px;height:1.5px;background:#999"></div>
<svg class="a" style="left:220.69px;top:460px;" width="9" height="10" viewBox="0 0 9 10"><rect x="1.5" y="1.5" width="5" height="7" fill="#e9e2c0" stroke="#b9a860" stroke-width="0.5"/><path d="M5,1 L8,3" stroke="#e8883a" stroke-width="0.9"/></svg>
<div class="a" style="left:224.89px;top:472.5px;width:0.6px;height:1.5px;background:#999"></div>
<svg class="a" style="left:231.72500000000002px;top:460px;" width="9" height="10" viewBox="0 0 9 10"><circle cx="4.5" cy="5" r="3.6" fill="#9a5fd0"/><circle cx="4.5" cy="5" r="1.5" fill="#d9c2f0"/></svg>
<div class="a" style="left:235.925px;top:472.5px;width:0.6px;height:1.5px;background:#999"></div>
<svg class="a" style="left:242.76px;top:460px;" width="9" height="10" viewBox="0 0 9 10"><circle cx="2" cy="5" r="1.3" fill="#333"/><path d="M3,5 H8" stroke="#333" stroke-width="0.9"/><circle cx="7.3" cy="5" r="1" fill="#777"/></svg>
<div class="a" style="left:246.95999999999998px;top:472.5px;width:0.6px;height:1.5px;background:#999"></div>
<svg class="a" style="left:253.79500000000002px;top:460px;" width="9" height="10" viewBox="0 0 9 10"><rect x="0.8" y="1" width="7.4" height="7.4" fill="#fafafa" stroke="#a9a9a9" stroke-width="0.5"/><path d="M3,2.5 L7,3 L5.5,7" fill="none" stroke="#e8883a" stroke-width="0.9"/><path d="M1.2,8.5 h3" stroke="#777" stroke-width="0.5"/></svg>
<div class="a" style="left:257.995px;top:472.5px;width:0.6px;height:1.5px;background:#999"></div>
<svg class="a" style="left:264.83px;top:460px;" width="9" height="10" viewBox="0 0 9 10"><rect x="0.8" y="1" width="7.4" height="7.4" fill="#fafafa" stroke="#a9a9a9" stroke-width="0.5"/><path d="M3,2.5 L7,3 L5.5,7" fill="none" stroke="#e8883a" stroke-width="0.9"/><path d="M1.2,8.5 h3" stroke="#777" stroke-width="0.5"/></svg>
<div class="a" style="left:269.03px;top:472.5px;width:0.6px;height:1.5px;background:#999"></div>
<svg class="a" style="left:275.865px;top:460px;" width="9" height="10" viewBox="0 0 9 10"><path d="M1,4 L3,2 V8 L1,9.5 Z" fill="#5a9a5a"/><path d="M3.5,3 L5.5,1 V7.5 L3.5,9 Z" fill="#3fae4a"/><path d="M6,3.5 L8,2 V7 L6,8.5 Z" fill="#e89a4a"/></svg>
<div class="a" style="left:280.065px;top:472.5px;width:0.6px;height:1.5px;background:#999"></div>
<svg class="a" style="left:286.9px;top:460px;" width="9" height="10" viewBox="0 0 9 10"><rect x="0.8" y="1" width="7.4" height="7.4" fill="#fafafa" stroke="#a9a9a9" stroke-width="0.5"/><path d="M3,2.5 L7,3 L5.5,7" fill="none" stroke="#e8883a" stroke-width="0.9"/><path d="M1.2,8.5 h3" stroke="#777" stroke-width="0.5"/></svg>
<div class="a" style="left:291.09999999999997px;top:472.5px;width:0.6px;height:1.5px;background:#999"></div>
<svg class="a" style="left:297.935px;top:460px;" width="9" height="10" viewBox="0 0 9 10"><rect x="0.8" y="1" width="7.4" height="7.4" fill="#fafafa" stroke="#a9a9a9" stroke-width="0.5"/><path d="M3,2.5 L7,3 L5.5,7" fill="none" stroke="#e8883a" stroke-width="0.9"/><path d="M1.2,8.5 h3" stroke="#777" stroke-width="0.5"/></svg>
<div class="a" style="left:302.135px;top:472.5px;width:0.6px;height:1.5px;background:#999"></div>
<svg class="a" style="left:308.97px;top:460px;" width="9" height="10" viewBox="0 0 9 10"><path d="M1,2.5 L2.5,1 H8 V7.5 L6.5,9 H1 Z" fill="#3f8fdc"/><path d="M6.5,2.5 L8,1 V7.5 L6.5,9 Z" fill="#2467ad"/></svg>
<div class="a" style="left:313.17px;top:472.5px;width:0.6px;height:1.5px;background:#999"></div>
<svg class="a" style="left:320.005px;top:460px;" width="9" height="10" viewBox="0 0 9 10"><path d="M1,2.5 L2.5,1 H8 V7.5 L6.5,9 H1 Z" fill="#3f8fdc"/><path d="M6.5,2.5 L8,1 V7.5 L6.5,9 Z" fill="#2467ad"/></svg>
<div class="a" style="left:324.205px;top:472.5px;width:0.6px;height:1.5px;background:#999"></div>
<svg class="a" style="left:331.04px;top:460px;" width="9" height="10" viewBox="0 0 9 10"><path d="M1,2.5 L2.5,1 H8 V7.5 L6.5,9 H1 Z" fill="#3f8fdc"/><path d="M6.5,2.5 L8,1 V7.5 L6.5,9 Z" fill="#2467ad"/></svg>
<div class="a" style="left:335.24px;top:472.5px;width:0.6px;height:1.5px;background:#999"></div>
<svg class="a" style="left:342.075px;top:460px;" width="9" height="10" viewBox="0 0 9 10"><path d="M1,2.5 L2.5,1 H8 V7.5 L6.5,9 H1 Z" fill="#3f8fdc"/><path d="M6.5,2.5 L8,1 V7.5 L6.5,9 Z" fill="#2467ad"/></svg>
<div class="a" style="left:346.275px;top:472.5px;width:0.6px;height:1.5px;background:#999"></div>
<svg class="a" style="left:353.11px;top:460px;" width="9" height="10" viewBox="0 0 9 10"><path d="M1,2.5 L2.5,1 H8 V7.5 L6.5,9 H1 Z" fill="#3f8fdc"/><path d="M6.5,2.5 L8,1 V7.5 L6.5,9 Z" fill="#2467ad"/></svg>
<div class="a" style="left:357.31px;top:472.5px;width:0.6px;height:1.5px;background:#999"></div>
<svg class="a" style="left:364.145px;top:460px;" width="9" height="10" viewBox="0 0 9 10"><rect x="0.8" y="1" width="7.6" height="7.4" fill="#5a6a78" stroke="#333" stroke-width="0.5"/><path d="M2,2.5 L7,7.5 M7,2.5 L4.5,5" stroke="#dfe6ee" stroke-width="0.9"/><rect x="4.5" y="4.5" width="3.5" height="3.5" fill="#e8eef5"/></svg>
<div class="a" style="left:368.34499999999997px;top:472.5px;width:0.6px;height:1.5px;background:#999"></div>
<svg class="a" style="left:375.18px;top:460px;" width="9" height="10" viewBox="0 0 9 10"><path d="M1,2.5 L2.5,1 H8 V7.5 L6.5,9 H1 Z" fill="#3f8fdc"/><path d="M6.5,2.5 L8,1 V7.5 L6.5,9 Z" fill="#2467ad"/></svg>
<div class="a" style="left:379.38px;top:472.5px;width:0.6px;height:1.5px;background:#999"></div>
<svg class="a" style="left:386.215px;top:460px;" width="9" height="10" viewBox="0 0 9 10"><path d="M1,2.5 L2.5,1 H8 V7.5 L6.5,9 H1 Z" fill="#3f8fdc"/><path d="M6.5,2.5 L8,1 V7.5 L6.5,9 Z" fill="#2467ad"/></svg>
<div class="a" style="left:390.41499999999996px;top:472.5px;width:0.6px;height:1.5px;background:#999"></div>
<svg class="a" style="left:397.25px;top:460px;" width="9" height="10" viewBox="0 0 9 10"><rect x="-1" y="-1" width="11" height="12" fill="#e6e62a"/><path d="M3,8.5 V4 L5,2 L6,5 V8.5 Z" fill="#3f8fdc"/></svg>
<div class="a" style="left:401.45px;top:472.5px;width:0.6px;height:1.5px;background:#999"></div>
<svg class="a" style="left:408.28499999999997px;top:460px;" width="9" height="10" viewBox="0 0 9 10"><rect x="0.8" y="1" width="7.4" height="7.4" fill="#fafafa" stroke="#a9a9a9" stroke-width="0.5"/><path d="M3,2.5 L7,3 L5.5,7" fill="none" stroke="#e8883a" stroke-width="0.9"/><path d="M1.2,8.5 h3" stroke="#777" stroke-width="0.5"/></svg>
<div class="a" style="left:412.48499999999996px;top:472.5px;width:0.6px;height:1.5px;background:#999"></div>
<svg class="a" style="left:419.32px;top:460px;" width="9" height="10" viewBox="0 0 9 10"><path d="M4.5,1 L6,3 H5 V4.5 H6.5 V3.5 L8.5,5 L6.5,6.5 V5.5 H5 V7 H6 L4.5,9 L3,7 H4 V5.5 H2.5 V6.5 L0.5,5 L2.5,3.5 V4.5 H4 V3 H3 Z" fill="#2a2a2a"/></svg>
<div class="a" style="left:423.52px;top:472.5px;width:0.6px;height:1.5px;background:#999"></div>
<svg class="a" style="left:430.355px;top:460px;" width="9" height="10" viewBox="0 0 9 10"><rect x="2" y="1.5" width="4.5" height="7" fill="#d4d4d4" stroke="#8a8a8a" stroke-width="0.5"/><path d="M1,2 H4" stroke="#555" stroke-width="0.8"/></svg>
<div class="a" style="left:434.555px;top:472.5px;width:0.6px;height:1.5px;background:#999"></div>
<svg class="a" style="left:441.39px;top:460px;" width="9" height="10" viewBox="0 0 9 10"><rect x="0.8" y="1" width="7.4" height="7.4" fill="#fafafa" stroke="#a9a9a9" stroke-width="0.5"/><path d="M3,2.5 L7,3 L5.5,7" fill="none" stroke="#e8883a" stroke-width="0.9"/><path d="M1.2,8.5 h3" stroke="#777" stroke-width="0.5"/></svg>
<div class="a" style="left:445.59px;top:472.5px;width:0.6px;height:1.5px;background:#999"></div>
<svg class="a" style="left:452.425px;top:460px;" width="9" height="10" viewBox="0 0 9 10"><path d="M1,6 L4.5,2 L8,5 L5.5,8.5 Z" fill="#e8944a"/><path d="M1,6 L5.5,8.5 L5.5,9.5 L1,7 Z" fill="#8a8a8a"/></svg>
<div class="a" style="left:456.625px;top:472.5px;width:0.6px;height:1.5px;background:#999"></div>
<svg class="a" style="left:463.46px;top:460px;" width="9" height="10" viewBox="0 0 9 10"><rect x="0.8" y="1" width="7.4" height="7.4" fill="#fafafa" stroke="#a9a9a9" stroke-width="0.5"/><path d="M3,2.5 L7,3 L5.5,7" fill="none" stroke="#e8883a" stroke-width="0.9"/><path d="M1.2,8.5 h3" stroke="#777" stroke-width="0.5"/></svg>
<div class="a" style="left:467.65999999999997px;top:472.5px;width:0.6px;height:1.5px;background:#999"></div>
<svg class="a" style="left:474.495px;top:460px;" width="9" height="10" viewBox="0 0 9 10"><path d="M1,2.5 L2.5,1 H8 V7.5 L6.5,9 H1 Z" fill="#3f8fdc"/><path d="M6.5,2.5 L8,1 V7.5 L6.5,9 Z" fill="#2467ad"/></svg>
<div class="a" style="left:478.695px;top:472.5px;width:0.6px;height:1.5px;background:#999"></div>
<svg class="a" style="left:485.53px;top:460px;" width="9" height="10" viewBox="0 0 9 10"><path d="M1,2.5 L2.5,1 H8 V7.5 L6.5,9 H1 Z" fill="#3f8fdc"/><path d="M6.5,2.5 L8,1 V7.5 L6.5,9 Z" fill="#2467ad"/></svg>
<div class="a" style="left:489.72999999999996px;top:472.5px;width:0.6px;height:1.5px;background:#999"></div>
<svg class="a" style="left:496.565px;top:460px;" width="9" height="10" viewBox="0 0 9 10"><path d="M1,2.5 L2.5,1 H8 V7.5 L6.5,9 H1 Z" fill="#3f8fdc"/><path d="M6.5,2.5 L8,1 V7.5 L6.5,9 Z" fill="#2467ad"/></svg>
<div class="a" style="left:500.765px;top:472.5px;width:0.6px;height:1.5px;background:#999"></div>
<svg class="a" style="left:507.6px;top:460px;" width="9" height="10" viewBox="0 0 9 10"><path d="M1,9 L4,1.5 H5.5 L8.5,9 H6.8 L6.2,7.2 H3.3 L2.7,9 Z M3.8,5.8 H5.7 L4.75,3 Z" fill="#2f7fd0"/></svg>
<div class="a" style="left:511.8px;top:472.5px;width:0.6px;height:1.5px;background:#999"></div>
<svg class="a" style="left:518.635px;top:460px;" width="9" height="10" viewBox="0 0 9 10"><rect x="0.8" y="1" width="7.4" height="7.4" fill="#fafafa" stroke="#a9a9a9" stroke-width="0.5"/><path d="M3,2.5 L7,3 L5.5,7" fill="none" stroke="#e8883a" stroke-width="0.9"/><path d="M1.2,8.5 h3" stroke="#777" stroke-width="0.5"/></svg>
<div class="a" style="left:522.835px;top:472.5px;width:0.6px;height:1.5px;background:#999"></div>
<svg class="a" style="left:529.6700000000001px;top:460px;" width="9" height="10" viewBox="0 0 9 10"><path d="M1,2.5 L2.5,1 H8 V7.5 L6.5,9 H1 Z" fill="#3f8fdc"/><path d="M6.5,2.5 L8,1 V7.5 L6.5,9 Z" fill="#2467ad"/></svg>
<div class="a" style="left:533.8700000000001px;top:472.5px;width:0.6px;height:1.5px;background:#999"></div>
<svg class="a" style="left:540.705px;top:460px;" width="9" height="10" viewBox="0 0 9 10"><rect x="0.8" y="1" width="7.4" height="7.4" fill="#fafafa" stroke="#a9a9a9" stroke-width="0.5"/><path d="M3,2.5 L7,3 L5.5,7" fill="none" stroke="#e8883a" stroke-width="0.9"/><path d="M1.2,8.5 h3" stroke="#777" stroke-width="0.5"/></svg>
<div class="a" style="left:544.9050000000001px;top:472.5px;width:0.6px;height:1.5px;background:#999"></div>
<svg class="a" style="left:551.74px;top:460px;" width="9" height="10" viewBox="0 0 9 10"><path d="M1,2.5 L2.5,1 H8 V7.5 L6.5,9 H1 Z" fill="#3f8fdc"/><path d="M6.5,2.5 L8,1 V7.5 L6.5,9 Z" fill="#2467ad"/></svg>
<div class="a" style="left:555.94px;top:472.5px;width:0.6px;height:1.5px;background:#999"></div>
<svg class="a" style="left:562.775px;top:460px;" width="9" height="10" viewBox="0 0 9 10"><path d="M1,6 L4.5,2 L8,5 L5.5,8.5 Z" fill="#e8944a"/><path d="M1,6 L5.5,8.5 L5.5,9.5 L1,7 Z" fill="#8a8a8a"/></svg>
<div class="a" style="left:566.975px;top:472.5px;width:0.6px;height:1.5px;background:#999"></div>
<svg class="a" style="left:573.8100000000001px;top:460px;" width="9" height="10" viewBox="0 0 9 10"><rect x="0.8" y="1" width="7.4" height="7.4" fill="#fafafa" stroke="#a9a9a9" stroke-width="0.5"/><path d="M3,2.5 L7,3 L5.5,7" fill="none" stroke="#e8883a" stroke-width="0.9"/><path d="M1.2,8.5 h3" stroke="#777" stroke-width="0.5"/></svg>
<div class="a" style="left:578.0100000000001px;top:472.5px;width:0.6px;height:1.5px;background:#999"></div>
<svg class="a" style="left:584.845px;top:460px;" width="9" height="10" viewBox="0 0 9 10"><path d="M1,2.5 L2.5,1 H8 V7.5 L6.5,9 H1 Z" fill="#3f8fdc"/><path d="M6.5,2.5 L8,1 V7.5 L6.5,9 Z" fill="#2467ad"/></svg>
<div class="a" style="left:589.0450000000001px;top:472.5px;width:0.6px;height:1.5px;background:#999"></div>
<svg class="a" style="left:595.8800000000001px;top:460px;" width="9" height="10" viewBox="0 0 9 10"><path d="M1,2.5 L2.5,1 H8 V7.5 L6.5,9 H1 Z" fill="#3f8fdc"/><path d="M6.5,2.5 L8,1 V7.5 L6.5,9 Z" fill="#2467ad"/></svg>
<div class="a" style="left:600.0800000000002px;top:472.5px;width:0.6px;height:1.5px;background:#999"></div>
<svg class="a" style="left:606.9150000000001px;top:460px;" width="9" height="10" viewBox="0 0 9 10"><rect x="0.8" y="1" width="7.6" height="7.4" fill="#5a6a78" stroke="#333" stroke-width="0.5"/><path d="M2,2.5 L7,7.5 M7,2.5 L4.5,5" stroke="#dfe6ee" stroke-width="0.9"/><rect x="4.5" y="4.5" width="3.5" height="3.5" fill="#e8eef5"/></svg>
<div class="a" style="left:611.1150000000001px;top:472.5px;width:0.6px;height:1.5px;background:#999"></div>
<svg class="a" style="left:617.95px;top:460px;" width="9" height="10" viewBox="0 0 9 10"><rect x="0.8" y="1" width="7.6" height="7.4" fill="#5a6a78" stroke="#333" stroke-width="0.5"/><path d="M2,2.5 L7,7.5 M7,2.5 L4.5,5" stroke="#dfe6ee" stroke-width="0.9"/><rect x="4.5" y="4.5" width="3.5" height="3.5" fill="#e8eef5"/></svg>
<div class="a" style="left:622.1500000000001px;top:472.5px;width:0.6px;height:1.5px;background:#999"></div>
<svg class="a" style="left:628.985px;top:460px;" width="9" height="10" viewBox="0 0 9 10"><rect x="0.8" y="1" width="7.6" height="7.4" fill="#5a6a78" stroke="#333" stroke-width="0.5"/><path d="M2,2.5 L7,7.5 M7,2.5 L4.5,5" stroke="#dfe6ee" stroke-width="0.9"/><rect x="4.5" y="4.5" width="3.5" height="3.5" fill="#e8eef5"/></svg>
<div class="a" style="left:633.1850000000001px;top:472.5px;width:0.6px;height:1.5px;background:#999"></div>
<svg class="a" style="left:640.0200000000001px;top:460px;" width="9" height="10" viewBox="0 0 9 10"><rect x="0.8" y="1" width="7.6" height="7.4" fill="#5a6a78" stroke="#333" stroke-width="0.5"/><path d="M2,2.5 L7,7.5 M7,2.5 L4.5,5" stroke="#dfe6ee" stroke-width="0.9"/><rect x="4.5" y="4.5" width="3.5" height="3.5" fill="#e8eef5"/></svg>
<div class="a" style="left:644.2200000000001px;top:472.5px;width:0.6px;height:1.5px;background:#999"></div>
<svg class="a" style="left:651.0550000000001px;top:460px;" width="9" height="10" viewBox="0 0 9 10"><rect x="0.8" y="1" width="7.6" height="7.4" fill="#5a6a78" stroke="#333" stroke-width="0.5"/><path d="M2,2.5 L7,7.5 M7,2.5 L4.5,5" stroke="#dfe6ee" stroke-width="0.9"/><rect x="4.5" y="4.5" width="3.5" height="3.5" fill="#e8eef5"/></svg>
<div class="a" style="left:655.2550000000001px;top:472.5px;width:0.6px;height:1.5px;background:#999"></div>
<svg class="a" style="left:662.09px;top:460px;" width="9" height="10" viewBox="0 0 9 10"><rect x="0.8" y="1" width="7.6" height="7.4" fill="#5a6a78" stroke="#333" stroke-width="0.5"/><path d="M2,2.5 L7,7.5 M7,2.5 L4.5,5" stroke="#dfe6ee" stroke-width="0.9"/><rect x="4.5" y="4.5" width="3.5" height="3.5" fill="#e8eef5"/></svg>
<div class="a" style="left:666.2900000000001px;top:472.5px;width:0.6px;height:1.5px;background:#999"></div>
<svg class="a" style="left:673.125px;top:460px;" width="9" height="10" viewBox="0 0 9 10"><rect x="0.8" y="1" width="7.6" height="7.4" fill="#5a6a78" stroke="#333" stroke-width="0.5"/><path d="M2,2.5 L7,7.5 M7,2.5 L4.5,5" stroke="#dfe6ee" stroke-width="0.9"/><rect x="4.5" y="4.5" width="3.5" height="3.5" fill="#e8eef5"/></svg>
<div class="a" style="left:677.325px;top:472.5px;width:0.6px;height:1.5px;background:#999"></div>
<svg class="a" style="left:684.1600000000001px;top:460px;" width="9" height="10" viewBox="0 0 9 10"><rect x="0.8" y="1" width="7.6" height="7.4" fill="#5a6a78" stroke="#333" stroke-width="0.5"/><path d="M2,2.5 L7,7.5 M7,2.5 L4.5,5" stroke="#dfe6ee" stroke-width="0.9"/><rect x="4.5" y="4.5" width="3.5" height="3.5" fill="#e8eef5"/></svg>
<div class="a" style="left:688.3600000000001px;top:472.5px;width:0.6px;height:1.5px;background:#999"></div>
<svg class="a" style="left:695.195px;top:460px;" width="9" height="10" viewBox="0 0 9 10"><path d="M1,2.5 L2.5,1 H8 V7.5 L6.5,9 H1 Z" fill="#3f8fdc"/><path d="M6.5,2.5 L8,1 V7.5 L6.5,9 Z" fill="#2467ad"/></svg>
<div class="a" style="left:699.3950000000001px;top:472.5px;width:0.6px;height:1.5px;background:#999"></div>
<svg class="a" style="left:706.23px;top:460px;" width="9" height="10" viewBox="0 0 9 10"><rect x="0.8" y="1" width="7.4" height="7.4" fill="#fafafa" stroke="#a9a9a9" stroke-width="0.5"/><path d="M3,2.5 L7,3 L5.5,7" fill="none" stroke="#e8883a" stroke-width="0.9"/><path d="M1.2,8.5 h3" stroke="#777" stroke-width="0.5"/></svg>
<div class="a" style="left:710.4300000000001px;top:472.5px;width:0.6px;height:1.5px;background:#999"></div>
<svg class="a" style="left:717.2650000000001px;top:460px;" width="9" height="10" viewBox="0 0 9 10"><path d="M1,2.5 L2.5,1 H8 V7.5 L6.5,9 H1 Z" fill="#3f8fdc"/><path d="M6.5,2.5 L8,1 V7.5 L6.5,9 Z" fill="#2467ad"/></svg>
<div class="a" style="left:721.4650000000001px;top:472.5px;width:0.6px;height:1.5px;background:#999"></div>
<svg class="a" style="left:728.3000000000001px;top:460px;" width="9" height="10" viewBox="0 0 9 10"><path d="M1,6 L4.5,2 L8,5 L5.5,8.5 Z" fill="#e8944a"/><path d="M1,6 L5.5,8.5 L5.5,9.5 L1,7 Z" fill="#8a8a8a"/></svg>
<div class="a" style="left:732.5000000000001px;top:472.5px;width:0.6px;height:1.5px;background:#999"></div>
<svg class="a" style="left:739.335px;top:460px;" width="9" height="10" viewBox="0 0 9 10"><rect x="0.8" y="1" width="7.4" height="7.4" fill="#fafafa" stroke="#a9a9a9" stroke-width="0.5"/><path d="M3,2.5 L7,3 L5.5,7" fill="none" stroke="#e8883a" stroke-width="0.9"/><path d="M1.2,8.5 h3" stroke="#777" stroke-width="0.5"/></svg>
<div class="a" style="left:743.5350000000001px;top:472.5px;width:0.6px;height:1.5px;background:#999"></div>
<svg class="a" style="left:750.37px;top:460px;" width="9" height="10" viewBox="0 0 9 10"><path d="M1,2.5 L2.5,1 H8 V7.5 L6.5,9 H1 Z" fill="#3f8fdc"/><path d="M6.5,2.5 L8,1 V7.5 L6.5,9 Z" fill="#2467ad"/></svg>
<div class="a" style="left:754.57px;top:472.5px;width:0.6px;height:1.5px;background:#999"></div>
<svg class="a" style="left:761.4050000000001px;top:460px;" width="9" height="10" viewBox="0 0 9 10"><rect x="0.8" y="1" width="7.4" height="7.4" fill="#fafafa" stroke="#a9a9a9" stroke-width="0.5"/><path d="M3,2.5 L7,3 L5.5,7" fill="none" stroke="#e8883a" stroke-width="0.9"/><path d="M1.2,8.5 h3" stroke="#777" stroke-width="0.5"/></svg>
<div class="a" style="left:765.6050000000001px;top:472.5px;width:0.6px;height:1.5px;background:#999"></div>
<svg class="a" style="left:772.44px;top:460px;" width="9" height="10" viewBox="0 0 9 10"><rect x="0.8" y="1" width="7.4" height="7.4" fill="#fafafa" stroke="#a9a9a9" stroke-width="0.5"/><path d="M3,2.5 L7,3 L5.5,7" fill="none" stroke="#e8883a" stroke-width="0.9"/><path d="M1.2,8.5 h3" stroke="#777" stroke-width="0.5"/></svg>
<div class="a" style="left:776.6400000000001px;top:472.5px;width:0.6px;height:1.5px;background:#999"></div>
<svg class="a" style="left:783.475px;top:460px;" width="9" height="10" viewBox="0 0 9 10"><rect x="0.8" y="1" width="7.4" height="7.4" fill="#fafafa" stroke="#a9a9a9" stroke-width="0.5"/><path d="M3,2.5 L7,3 L5.5,7" fill="none" stroke="#e8883a" stroke-width="0.9"/><path d="M1.2,8.5 h3" stroke="#777" stroke-width="0.5"/></svg>
<div class="a" style="left:787.6750000000001px;top:472.5px;width:0.6px;height:1.5px;background:#999"></div>
<svg class="a" style="left:794.5100000000001px;top:460px;" width="9" height="10" viewBox="0 0 9 10"><path d="M1,2.5 L2.5,1 H8 V7.5 L6.5,9 H1 Z" fill="#3f8fdc"/><path d="M6.5,2.5 L8,1 V7.5 L6.5,9 Z" fill="#2467ad"/></svg>
<div class="a" style="left:798.7100000000002px;top:472.5px;width:0.6px;height:1.5px;background:#999"></div>
<div class="a" style="left:60px;top:473px;width:740px;height:0.6px;background:#d5d5d5"></div>
<span class="t" style="left:585px;top:456.05px;font-size:2.5px;color:#444;">▲▲▲</span>
<div class="a" style="left:-6px;top:476.5px;width:812px;height:26px;background:#1b2a3e;"></div>
<svg class="a" style="left:6px;top:482px;" width="9" height="9" viewBox="0 0 9 9"><g fill="#fff"><rect x="0" y="0" width="4" height="4"/><rect x="4.7" y="0" width="4" height="4"/><rect x="0" y="4.7" width="4" height="4"/><rect x="4.7" y="4.7" width="4" height="4"/></g></svg>
<div class="a" style="left:22.5px;top:476.5px;width:131px;height:26px;background:#f3f3f3;"></div>
<svg class="a" style="left:27px;top:482px;" width="8" height="8" viewBox="0 0 8 8"><circle cx="4.8" cy="3" r="2.3" fill="none" stroke="#333" stroke-width="0.8"/><path d="M3.2,4.7 L0.8,7.3" stroke="#333" stroke-width="0.9"/></svg>
<span class="t" style="left:40px;top:482.32px;font-size:7.2px;color:#222;letter-spacing:-0.165px;">Taper ici pour rechercher</span>
<div class="a" style="left:403px;top:476.5px;width:22px;height:26px;background:#3a4a5e;"></div>
<div class="a" style="left:405px;top:494.8px;width:18px;height:1.2px;background:#8fc0f0;"></div>
<div class="a" style="left:159px;top:494.8px;width:16px;height:1.2px;background:#8fc0f0;"></div>
<div class="a" style="left:270px;top:494.8px;width:16px;height:1.2px;background:#8fc0f0;"></div>
<svg class="a" style="left:161px;top:480.5px;" width="12" height="12" viewBox="0 0 12 12"><rect x="1" y="2" width="10" height="8" fill="#f5c542"/><rect x="1" y="4.5" width="10" height="5.5" fill="#4aa3e8"/><rect x="1" y="8.5" width="10" height="1.5" fill="#f5c542"/></svg>
<svg class="a" style="left:183px;top:480.5px;" width="12" height="12" viewBox="0 0 12 12"><circle cx="6" cy="6" r="5" fill="#f0642a"/><circle cx="6.3" cy="6.5" r="2.8" fill="#7a3fc0"/><path d="M1.5,4 C3,1 8,0.5 10.5,3.5 C8,2.5 5,3 3.5,6 Z" fill="#f5b02a"/></svg>
<svg class="a" style="left:206px;top:480.5px;" width="12" height="12" viewBox="0 0 12 12"><circle cx="6.5" cy="6" r="5" fill="#d8482a"/><rect x="0.5" y="3" width="6" height="6" fill="#b8321a"/><path d="M2.5,4.3 V7.8 M2.5,4.5 H3.8 C5,4.5 5,6.2 3.8,6.2 H2.5" stroke="#fff" stroke-width="0.8" fill="none"/></svg>
<svg class="a" style="left:228px;top:480.5px;" width="12" height="12" viewBox="0 0 12 12"><rect x="3" y="1" width="8.5" height="10" fill="#1f7a45"/><rect x="0.5" y="3" width="6" height="6" fill="#155c32"/><path d="M2,4.3 L5,7.7 M5,4.3 L2,7.7" stroke="#fff" stroke-width="0.8"/></svg>
<svg class="a" style="left:251px;top:480.5px;" width="12" height="12" viewBox="0 0 12 12"><rect x="0.5" y="0.5" width="11" height="11" fill="#f4f4f4"/><path d="M2.5,6 L9,2 V10 Z" fill="#22b455"/></svg>
<svg class="a" style="left:273px;top:480.5px;" width="12" height="12" viewBox="0 0 12 12"><rect x="0.5" y="1.5" width="11" height="9" fill="#2a6fc8"/><rect x="0.5" y="1.5" width="11" height="2" fill="#e8eef5"/><path d="M3,8.5 V6.5 L5,5 L7,6.5 V8.5 Z" fill="#fff"/></svg>
<svg class="a" style="left:295px;top:480.5px;" width="12" height="12" viewBox="0 0 12 12"><circle cx="6" cy="6" r="5.2" fill="#f4f4f4"/><circle cx="6" cy="6" r="4" fill="#d8281a"/><path d="M4,8 L6,3.5 L8,8 M4.8,6.5 H7.2" stroke="#fff" stroke-width="0.8" fill="none"/></svg>
<svg class="a" style="left:317px;top:480.5px;" width="12" height="12" viewBox="0 0 12 12"><rect x="2" y="0.5" width="8" height="11" fill="#4a5a6a"/><rect x="3" y="1.5" width="6" height="2.5" fill="#d8e4f0"/><g fill="#a8c4e0"><rect x="3" y="5" width="1.5" height="1.5"/><rect x="5.25" y="5" width="1.5" height="1.5"/><rect x="7.5" y="5" width="1.5" height="1.5"/><rect x="3" y="7.5" width="1.5" height="1.5"/><rect x="5.25" y="7.5" width="1.5" height="1.5"/><rect x="7.5" y="7.5" width="1.5" height="1.5"/></g></svg>
<svg class="a" style="left:339px;top:480.5px;" width="12" height="12" viewBox="0 0 12 12"><path d="M6,0.5 L9.5,9 H2.5 Z" fill="#f58a1a"/><path d="M4.6,4 H7.4 L8.2,6 H3.8 Z" fill="#fff"/><rect x="1" y="9" width="10" height="2" fill="#f58a1a"/></svg>
<svg class="a" style="left:363px;top:480.5px;" width="12" height="12" viewBox="0 0 12 12"><circle cx="6" cy="6" r="5.2" fill="#e8402a"/><path d="M6,6 L1.5,3.4 A5.2,5.2 0 0 0 6,11.2 Z" fill="#2aa84a"/><path d="M6,6 L6,11.2 A5.2,5.2 0 0 0 10.5,3.4 Z" fill="#f5c02a"/><circle cx="6" cy="6" r="2.3" fill="#fff"/><circle cx="6" cy="6" r="1.7" fill="#3a7ee8"/></svg>
<svg class="a" style="left:385px;top:480.5px;" width="12" height="12" viewBox="0 0 12 12"><rect x="4" y="1.5" width="7.5" height="9" fill="#2a8ae0"/><rect x="0.5" y="3.5" width="6" height="6" fill="#0f5fb0"/><circle cx="3.5" cy="6.5" r="1.6" fill="none" stroke="#fff" stroke-width="0.8"/></svg>
<svg class="a" style="left:408px;top:480.5px;" width="12" height="12" viewBox="0 0 12 12"><rect x="1.5" y="1" width="9" height="10" fill="#f07a1e"/><path d="M4.5,3 H8 M4.5,3 V9 M4.5,5.8 H7" stroke="#fff" stroke-width="1.1" fill="none"/></svg>
<svg class="a" style="left:783.5px;top:484.5px;" width="8" height="5" viewBox="0 0 8 5"><path d="M1,4 L4,1 L7,4" fill="none" stroke="#e8e8e8" stroke-width="0.9"/></svg>
<svg class="a" style="left:796px;top:483px;" width="4" height="8" viewBox="0 0 4 8"><rect x="0.5" y="0.5" width="4" height="1.2" fill="#eee"/><rect x="1.2" y="2.5" width="3" height="3.5" fill="#eee"/></svg>
</div></body></html>
